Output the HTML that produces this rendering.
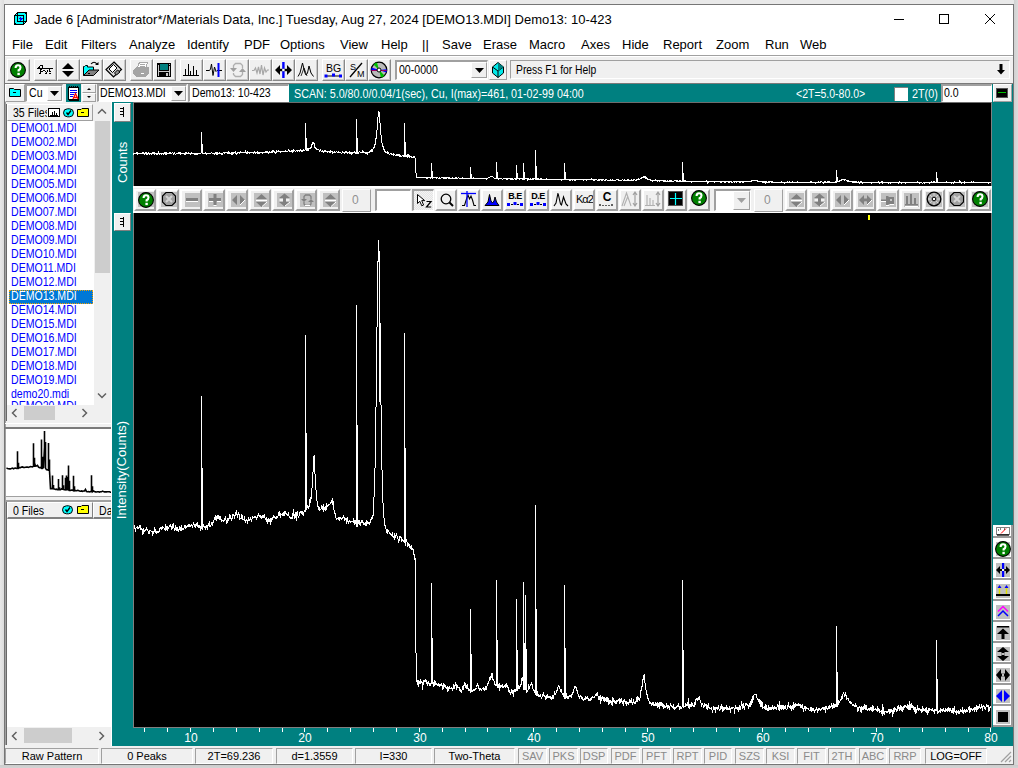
<!DOCTYPE html>
<html><head><meta charset="utf-8">
<style>
*{margin:0;padding:0;box-sizing:border-box}
html,body{width:1018px;height:768px;overflow:hidden;background:#e9e9e9;font-family:"Liberation Sans",sans-serif;}
.a{position:absolute}
#win{left:4px;top:4px;width:1010px;height:761px;border:1px solid #767676;background:#f0f0f0}
.title{font-size:13px;color:#000;white-space:nowrap}
.menu{font-size:13px;color:#000;white-space:nowrap;top:37px}
.ms{font-size:12px;transform:scaleX(0.88);transform-origin:0 0;white-space:nowrap;line-height:14px;color:#000}
.tb{top:59px;width:23px;height:22px;background:#f0f0f0;border-top:1px solid #fff;border-left:1px solid #fff;border-right:1px solid #888;border-bottom:1px solid #888;box-shadow:inset -1px -1px #c8c8c8}
.tb svg{position:absolute;left:2px;top:2px}
.sunk{border-top:1px solid #a0a0a0;border-left:1px solid #a0a0a0;border-bottom:1px solid #fff;border-right:1px solid #fff}
.sunk2{border-top:2px solid #a0a0a0;border-left:2px solid #a0a0a0;border-bottom:1px solid #fff;border-right:1px solid #fff}
.raise{border-top:1px solid #fff;border-left:1px solid #fff;border-right:1px solid #a0a0a0;border-bottom:1px solid #a0a0a0;background:#f0f0f0}
.t11{font-size:11px;white-space:nowrap;line-height:13px}
.fl{font-size:12px;color:#0000ff;white-space:nowrap;left:11px;line-height:14px;transform-origin:0 0;transform:scaleX(0.88)}
.pb{top:189px;width:22px;height:22px;background:#f0f0f0;border-top:2px solid #fff;border-left:2px solid #fff;border-right:2px solid #a0a0a0;border-bottom:2px solid #a0a0a0}
.rb{left:993px;width:20px;height:21px;background:#fff;border-right:2px solid #9a9a9a;border-bottom:2px solid #9a9a9a}
.rb i{position:absolute;left:3px;top:4px;width:14px;height:14px;background:#c0c0c0}
.rb svg{position:absolute;left:1px;top:1px}
.st{top:748px;height:16px;border-top:1px solid #a0a0a0;border-left:1px solid #a0a0a0;border-right:1px solid #fff;border-bottom:1px solid #fff;font-size:11px;line-height:14px;text-align:center;white-space:nowrap;color:#000}
.sg{color:#8a8a8a}
.tick{width:1px;height:4px;top:728px;background:#fff}
.xl{top:732px;font-size:12px;color:#fff;width:30px;text-align:center;line-height:13px}
</style></head><body>
<div class="a" style="left:0;top:0;width:1018px;height:4px;background:#e9e9e9"></div>
<div class="a" style="left:0;top:0;width:4px;height:768px;background:linear-gradient(90deg,#e8e8e8,#dcdcdc)"></div>
<div class="a" style="left:1014px;top:0;width:4px;height:768px;background:linear-gradient(90deg,#d0d0d0,#dcdcdc)"></div>
<div class="a" style="left:0;top:765px;width:1018px;height:3px;background:linear-gradient(180deg,#cccccc,#d4d4d4)"></div>
<div id="win" class="a"></div>
<!-- title bar -->
<div class="a" style="left:5px;top:5px;width:1008px;height:50px;background:#fff"></div>
<svg class="a" style="left:14px;top:12px" width="13" height="13" viewBox="0 0 13 13" shape-rendering="crispEdges"><path d="M3.5 0.5H12.5V9.5L9.5 12.5H0.5V3.5Z" fill="#00ffff" stroke="#000"/><path d="M0.5 3.5H9.5V12.5M3.5 0.5V9.5H12.5" fill="none" stroke="#000"/><path d="M12 1.5H11M1.5 12V11" stroke="#000"/><path d="M6.5 4.5V8.5M4.5 6.5H8.5" stroke="#0000ff" stroke-width="1"/><rect x="5.5" y="5.5" width="2" height="2" fill="#0000ff"/></svg>
<div class="a title" style="left:34px;top:12px;letter-spacing:0.03px">Jade 6 [Administrator*/Materials Data, Inc.] Tuesday, Aug 27, 2024 [DEMO13.MDI] Demo13: 10-423</div>
<svg class="a" style="left:893px;top:14px" width="110" height="12">
<path d="M1 5.5H11" stroke="#000"/>
<rect x="46.5" y="0.5" width="9" height="9" fill="none" stroke="#000"/>
<path d="M92 0L102 10M102 0L92 10" stroke="#000"/>
</svg>
<!-- menu -->
<div class="a menu" style="left:12px">File</div>
<div class="a menu" style="left:45px">Edit</div>
<div class="a menu" style="left:81px">Filters</div>
<div class="a menu" style="left:129px">Analyze</div>
<div class="a menu" style="left:187px">Identify</div>
<div class="a menu" style="left:244px">PDF</div>
<div class="a menu" style="left:280px">Options</div>
<div class="a menu" style="left:340px">View</div>
<div class="a menu" style="left:381px">Help</div>
<div class="a menu" style="left:422px">||</div>
<div class="a menu" style="left:442px">Save</div>
<div class="a menu" style="left:483px">Erase</div>
<div class="a menu" style="left:529px">Macro</div>
<div class="a menu" style="left:581px">Axes</div>
<div class="a menu" style="left:622px">Hide</div>
<div class="a menu" style="left:663px">Report</div>
<div class="a menu" style="left:716px">Zoom</div>
<div class="a menu" style="left:765px">Run</div>
<div class="a menu" style="left:800px">Web</div>
<div class="a" style="left:5px;top:55px;width:1008px;height:1px;background:#a0a0a0"></div>
<div class="a" style="left:5px;top:56px;width:1008px;height:1px;background:#fff"></div>
<!-- toolbar 1 -->
<div class="a tb" style="left:7px"></div>
<div class="a tb" style="left:34px"></div>
<div class="a tb" style="left:57px"></div>
<div class="a tb" style="left:80px"></div>
<div class="a tb" style="left:103px"></div>
<div class="a tb" style="left:130px"></div>
<div class="a tb" style="left:153px"></div>
<div class="a tb" style="left:180px"></div>
<div class="a tb" style="left:203px"></div>
<div class="a tb" style="left:226px"></div>
<div class="a tb" style="left:249px"></div>
<div class="a tb" style="left:272px"></div>
<div class="a tb" style="left:295px"></div>
<div class="a tb" style="left:322px"></div>
<div class="a tb" style="left:345px"></div>
<div class="a tb" style="left:368px"></div>
<svg class="a" style="left:10px;top:62px" width="16" height="16" viewBox="0 0 16 16"><circle cx="8" cy="8" r="7.4" fill="#008000" stroke="#000" stroke-width="1.1"/><path d="M5.6 6 Q5.6 3.3 8 3.3 Q10.5 3.3 10.5 5.6 Q10.5 7.2 8.6 8.2 V9.6" stroke="#fff" stroke-width="2.1" fill="none"/><rect x="7.4" y="10.8" width="2.4" height="2.3" fill="#fff"/></svg>
<svg class="a" style="left:34px;top:59px" width="23" height="22" viewBox="0 0 23 22" shape-rendering="crispEdges"><rect x="6" y="6" width="3" height="1" fill="#000"/><rect x="5" y="7" width="1" height="2" fill="#000"/><rect x="8" y="7" width="1" height="3" fill="#000"/><rect x="4" y="8" width="2" height="1" fill="#000"/><rect x="3" y="9" width="16" height="1" fill="#000"/><rect x="6" y="10" width="2" height="1" fill="#000"/><rect x="6" y="11" width="1" height="2" fill="#000"/><rect x="7" y="12" width="2" height="1" fill="#000"/><rect x="9" y="11" width="2" height="1" fill="#000"/><rect x="11" y="12" width="1" height="1" fill="#000"/><rect x="12" y="13" width="1" height="1" fill="#000"/><rect x="13" y="11" width="1" height="2" fill="#000"/><rect x="15" y="10" width="1" height="3" fill="#000"/><rect x="16" y="12" width="1" height="1" fill="#000"/><rect x="6" y="13" width="1" height="1" fill="#000"/><rect x="5" y="14" width="2" height="1" fill="#000"/><rect x="11" y="14" width="2" height="1" fill="#000"/><rect x="15" y="14" width="2" height="1" fill="#000"/><rect x="8" y="7" width="1" height="1" fill="#000"/></svg>
<svg class="a" style="left:61px;top:62px" width="14" height="16" viewBox="0 0 14 16"><path d="M1 7H13L7 1Z" fill="#000"/><path d="M1 9H13L7 15Z" fill="#000"/></svg>
<svg class="a" style="left:80px;top:59px" width="23" height="22" viewBox="0 0 23 22"><path d="M3.5 16.5V7.5H4.5L5.5 6.5H7.5V8H13.5V11" fill="#00ffff" stroke="#000"/><path d="M3.5 16.5L9 11H19L13.5 16.5Z" fill="#808080" stroke="#000"/><path d="M8 14.5H10" stroke="#000"/><path d="M11 5Q14 1.5 17 5" stroke="#000" fill="none" stroke-width="1.1"/><path d="M15 6H18.5V3Z" fill="#000"/></svg>
<svg class="a" style="left:103px;top:59px" width="23" height="22" viewBox="0 0 23 22"><path d="M11 3L18.5 10.5L10.5 18L3 10.5Z" fill="#d8d8d8" stroke="#000" stroke-width="1.2"/><path d="M6 10L10.5 5.5L14 9L9.5 13.5Z" fill="#fff" stroke="#000"/><path d="M11.5 14L14.5 11L17 13L13.5 16Z" fill="#909090" stroke="#000"/></svg>
<svg class="a" style="left:130px;top:59px" width="23" height="22" viewBox="0 0 23 22" shape-rendering="crispEdges"><path d="M7.5 8L9.5 3.5H17.5L16 8Z" fill="#fff" stroke="#a8a8a8"/><path d="M10 5.5H15M9.5 7H14.5" stroke="#a8a8a8"/><path d="M3 11L6.5 7.5H18.8V14.5L15.5 17.8H6L3 14.8Z" fill="#a4a4a4"/><rect x="11" y="13.5" width="3" height="1.3" fill="#fff"/></svg>
<svg class="a" style="left:153px;top:59px" width="23" height="22" viewBox="0 0 23 22" shape-rendering="crispEdges"><rect x="4" y="4" width="14" height="14" fill="#000"/><rect x="7" y="5" width="8" height="6" fill="#008080"/><rect x="5" y="6" width="1" height="11" fill="#c8c8c8"/><rect x="16" y="7" width="1" height="10" fill="#c8c8c8"/><rect x="16" y="5" width="1" height="1" fill="#c8c8c8"/><rect x="6" y="12" width="10" height="1" fill="#c8c8c8"/><rect x="13" y="14" width="2" height="3" fill="#c8c8c8"/></svg>
<svg class="a" style="left:180px;top:59px" width="23" height="22" viewBox="0 0 23 22" shape-rendering="crispEdges"><path d="M3 16.5H19M5.5 16.5V10M8.5 16.5V5M10.5 16.5V12M13.5 16.5V7M16.5 16.5V11" stroke="#000" stroke-width="1"/></svg>
<svg class="a" style="left:203px;top:59px" width="23" height="22" viewBox="0 0 23 22"><path d="M3 11.5H6.5L7.5 10L8.5 5L10 16.5L11.5 8L13 12.5L14 11.5H19" stroke="#000" stroke-width="1" fill="none"/><rect x="14.5" y="4" width="2" height="14" fill="#0000ff"/></svg>
<svg class="a" style="left:229px;top:62px" width="17" height="16" viewBox="0 0 17 16"><path d="M4.5 6V3.5L6.5 1.5H11.5L13.5 3.5V6M4.5 11V12.5L6.5 14.5H11.5L13.5 12.5V10" stroke="#b0b0b0" stroke-width="1.3" fill="none"/><path d="M1 6H8L4.5 10Z" fill="#a0a0a0"/><path d="M10 10H17L13.5 6Z" fill="#a0a0a0"/></svg>
<svg class="a" style="left:251px;top:62px" width="19" height="16" viewBox="0 0 19 16"><path d="M1 8.5H3L4.5 6L6 11L7.5 5L9 12L10.5 3L12 13L13.5 6L15 10L16.5 8H18" stroke="#a8a8a8" stroke-width="1.2" fill="none"/></svg>
<svg class="a" style="left:274px;top:61px" width="19" height="18" viewBox="0 0 19 18"><rect x="8.2" y="1" width="2.4" height="16" fill="#0000ff"/><path d="M1 9L6 4V14Z M18 9L13 4V14Z" fill="#000"/><rect x="5" y="7.8" width="9" height="2.4" fill="#000"/><rect x="8.2" y="7.8" width="2.4" height="2.4" fill="#fff"/></svg>
<svg class="a" style="left:295px;top:59px" width="23" height="22" viewBox="0 0 23 22"><path d="M3 17.5L5 14L7.5 4L10 14L11 16L12.5 14L14 7L16 14L18.5 17.5" stroke="#000" stroke-width="1" fill="none"/><path d="M6 17L9 9L12 17" stroke="#000" stroke-width="0.8" fill="none"/></svg>
<svg class="a" style="left:324px;top:61px" width="19" height="18" viewBox="0 0 19 18"><text x="9.5" y="10.5" font-family="Liberation Sans" font-size="10.5" text-anchor="middle" fill="#000">BG</text><path d="M2 15H9L16 15" stroke="#000" stroke-width="1"/><rect x="0.5" y="13.5" width="3" height="3" fill="#0000ff"/><rect x="8" y="12.5" width="3" height="3" fill="#0000ff"/><rect x="15" y="13.5" width="3" height="3" fill="#0000ff"/></svg>
<svg class="a" style="left:347px;top:61px" width="19" height="18" viewBox="0 0 19 18"><text x="3" y="8.5" font-family="Liberation Sans" font-size="9" fill="#000">S</text><text x="10" y="16" font-family="Liberation Sans" font-size="9" fill="#000">M</text><path d="M3 16L15 2" stroke="#000" stroke-width="1.3"/></svg>
<svg class="a" style="left:370px;top:61px" width="18" height="18" viewBox="0 0 18 18"><circle cx="9" cy="9" r="7.8" fill="#b8b8b8" stroke="#000" stroke-width="1.2"/><path d="M9 9L3.5 3.5A7.8 7.8 0 0 1 7 1.4Z" fill="#00c000"/><path d="M9 9L14.5 14.5A7.8 7.8 0 0 1 11 16.6Z" fill="#00c000"/><path d="M9 9L1.4 9.8A7.8 7.8 0 0 1 1.6 6.5Z" fill="#0000ff"/><path d="M9 9L16.6 8.2A7.8 7.8 0 0 1 16.4 11.5Z" fill="#0000ff"/><path d="M1.5 9.5H16.5" stroke="#a00060"/><circle cx="9" cy="9" r="2" fill="#fff" stroke="#000"/></svg>
<div class="a" style="left:395px;top:60px;width:93px;height:20px;background:#fff" class="sunk2"></div>
<div class="a sunk2" style="left:395px;top:60px;width:93px;height:20px;background:#fff"></div>
<div class="a ms" style="left:399px;top:63px">00-0000</div>
<div class="a raise" style="left:471px;top:62px;width:16px;height:16px"></div>
<svg class="a" style="left:475px;top:68px" width="9" height="5"><path d="M0 0H9L4.5 5Z" fill="#000"/></svg>
<div class="a raise" style="left:489px;top:60px;width:18px;height:20px"></div>
<svg class="a" style="left:492px;top:62px" width="12" height="16" viewBox="0 0 12 16"><path d="M6 0.5L11.5 5V11L6 15.5L0.5 11V5Z" fill="#00e8e8" stroke="#000"/><path d="M0.5 5L6 9L11.5 5M6 9V15.5" stroke="#000" fill="none"/><path d="M6 0.5L11.5 5L6 9Z" fill="#008080"/></svg>
<div class="a sunk" style="left:510px;top:60px;width:500px;height:19px"></div>
<div class="a ms" style="left:516px;top:63px;transform:scaleX(0.86)">Press F1 for Help</div>
<svg class="a" style="left:996px;top:64px" width="10" height="11"><path d="M3.5 0H6.5V6H9L5 10.5L1 6H3.5Z" fill="#000"/></svg>
<div class="a" style="left:5px;top:83px;width:1008px;height:1px;background:#7a7a7a"></div>
<!-- toolbar 2 -->
<div class="a raise" style="left:5px;top:84px;width:20px;height:18px"></div>
<svg class="a" style="left:9px;top:87px" width="12" height="10"><path d="M0.5 1.5H4.5L5.5 2.5H11.5V9.5H0.5Z" fill="#00ffff" stroke="#000"/><path d="M4 5.5H7" stroke="#000"/></svg>
<div class="a sunk2" style="left:25px;top:84px;width:38px;height:18px;background:#fff"></div>
<div class="a ms" style="left:29px;top:86px">Cu</div>
<div class="a raise" style="left:47px;top:86px;width:15px;height:15px"></div>
<svg class="a" style="left:50px;top:91px" width="9" height="5"><path d="M0 0H9L4.5 5Z" fill="#000"/></svg>
<div class="a" style="left:66px;top:84px;width:15px;height:18px;background:#008080"></div>
<svg class="a" style="left:67px;top:85px" width="13" height="16" viewBox="0 0 13 16" shape-rendering="crispEdges"><rect x="1.5" y="2.5" width="10" height="12" fill="#fff" stroke="#000"/><path d="M2 1.5H3M4 1.5H5M6 1.5H7M8 1.5H9M10 1.5H11" stroke="#000"/><path d="M3 5.5H10M3 7.5H10M3 9.5H7M3 11.5H6" stroke="#0000ff"/><path d="M6 14L8.5 8.5L11 14M7 12.5H10" stroke="#ff0000" stroke-width="1.3" fill="none" shape-rendering="auto"/><path d="M2 15.5H12" stroke="#000"/></svg>
<div class="a raise" style="left:82px;top:84px;width:14px;height:9px"></div>
<div class="a raise" style="left:82px;top:93px;width:14px;height:9px"></div>
<svg class="a" style="left:86px;top:87px" width="6" height="12"><path d="M1 3H5L3 1Z" fill="#000"/><path d="M1 9H5L3 11Z" fill="#000"/></svg>
<div class="a sunk2" style="left:97px;top:84px;width:90px;height:18px;background:#fff"></div>
<div class="a ms" style="left:100px;top:86px">DEMO13.MDI</div>
<div class="a raise" style="left:171px;top:86px;width:15px;height:15px"></div>
<svg class="a" style="left:174px;top:91px" width="9" height="5"><path d="M0 0H9L4.5 5Z" fill="#000"/></svg>
<div class="a sunk2" style="left:188px;top:84px;width:101px;height:18px;background:#fff"></div>
<div class="a ms" style="left:192px;top:86px">Demo13: 10-423</div>
<!-- teal plot area -->
<div class="a" style="left:289px;top:84px;width:724px;height:18px;background:#008080"></div>
<div class="a" style="left:112px;top:102px;width:901px;height:644px;background:#008080"></div>
<div class="a ms" style="left:294px;top:87px;color:#fff;transform:scaleX(0.893)">SCAN: 5.0/80.0/0.04/1(sec), Cu, I(max)=461, 01-02-99 04:00</div>
<div class="a ms" style="left:796px;top:87px;color:#fff;transform:scaleX(0.875)">&lt;2T=5.0-80.0&gt;</div>
<div class="a" style="left:894px;top:87px;width:14px;height:14px;background:#fff;border-top:1px solid #808080;border-left:1px solid #808080"></div>
<div class="a ms" style="left:912px;top:87px;color:#fff;transform:scaleX(0.9)">2T(0)</div>
<div class="a sunk2" style="left:941px;top:84px;width:51px;height:18px;background:#fff"></div>
<div class="a ms" style="left:944px;top:86px">0.0</div>
<div class="a raise" style="left:993px;top:84px;width:19px;height:18px"></div>
<div class="a" style="left:996px;top:88px;width:12px;height:10px;background:#000;border:1px solid #555"></div>
<div class="a" style="left:998px;top:92px;width:8px;height:1px;background:#00c000"></div>
<!-- left panel -->
<div class="a" style="left:5px;top:102px;width:107px;height:644px;background:#f0f0f0"></div>
<div class="a" style="left:5px;top:102px;width:1px;height:643px;background:#a0a0a0"></div>
<div class="a raise" style="left:7px;top:104px;width:86px;height:17px"></div>
<div class="a" style="left:8px;top:105px;width:39px;height:15px;overflow:hidden"><div class="ms" style="position:absolute;left:5px;top:1px">35 Files</div></div>
<svg class="a" style="left:47px;top:108px" width="44" height="10"><rect x="1.5" y="0.5" width="11" height="8" fill="#fff" stroke="#000"/><path d="M3 7H11M5 7V3.5M7 7V2.5M9 7V4.5" stroke="#000" shape-rendering="crispEdges"/><rect x="16.5" y="0.8" width="10" height="8" rx="4" fill="#00ffff" stroke="#000"/><path d="M19.5 4.5L21 6.5L24 2.5" stroke="#000" stroke-width="1.4" fill="none"/><path d="M30.5 1.5H34L35 0.5H41.5V8.5H30.5Z" fill="#ffff00" stroke="#000"/><path d="M34 4.5H37" stroke="#000"/></svg>
<div class="a" style="left:7px;top:121px;width:87px;height:284px;background:#fff"></div>
<div class="a" style="left:94px;top:104px;width:16px;height:301px;background:#f0f0f0"></div>
<div class="a" style="left:95px;top:121px;width:15px;height:152px;background:#cdcdcd"></div>
<svg class="a" style="left:97px;top:108px" width="10" height="7"><path d="M1 5.5L5 1.5L9 5.5" stroke="#606060" stroke-width="1.5" fill="none"/></svg>
<svg class="a" style="left:97px;top:392px" width="10" height="7"><path d="M1 1.5L5 5.5L9 1.5" stroke="#606060" stroke-width="1.5" fill="none"/></svg>
<div class="a fl" style="top:121px">DEMO01.MDI</div>
<div class="a fl" style="top:135px">DEMO02.MDI</div>
<div class="a fl" style="top:149px">DEMO03.MDI</div>
<div class="a fl" style="top:163px">DEMO04.MDI</div>
<div class="a fl" style="top:177px">DEMO05.MDI</div>
<div class="a fl" style="top:191px">DEMO06.MDI</div>
<div class="a fl" style="top:205px">DEMO07.MDI</div>
<div class="a fl" style="top:219px">DEMO08.MDI</div>
<div class="a fl" style="top:233px">DEMO09.MDI</div>
<div class="a fl" style="top:247px">DEMO10.MDI</div>
<div class="a fl" style="top:261px">DEMO11.MDI</div>
<div class="a fl" style="top:275px">DEMO12.MDI</div>
<div class="a" style="left:9px;top:290px;width:84px;height:14px;background:#0078d7;outline:1px dotted #f0a000;outline-offset:-1px"></div>
<div class="a fl" style="top:289px;color:#fff">DEMO13.MDI</div>
<div class="a fl" style="top:303px">DEMO14.MDI</div>
<div class="a fl" style="top:317px">DEMO15.MDI</div>
<div class="a fl" style="top:331px">DEMO16.MDI</div>
<div class="a fl" style="top:345px">DEMO17.MDI</div>
<div class="a fl" style="top:359px">DEMO18.MDI</div>
<div class="a fl" style="top:373px">DEMO19.MDI</div>
<div class="a fl" style="top:387px">demo20.mdi</div>
<div class="a" style="left:7px;top:401px;width:87px;height:4px;overflow:hidden"><div class="fl" style="position:absolute;left:4px;top:-2px">DEMO20.MDI</div></div>
<div class="a" style="left:7px;top:405px;width:103px;height:16px;background:#f0f0f0"></div>
<div class="a" style="left:24px;top:406px;width:31px;height:14px;background:#cdcdcd"></div>
<svg class="a" style="left:11px;top:408px" width="7" height="10"><path d="M5.5 1L1.5 5L5.5 9" stroke="#606060" stroke-width="1.5" fill="none"/></svg>
<svg class="a" style="left:81px;top:408px" width="7" height="10"><path d="M1.5 1L5.5 5L1.5 9" stroke="#606060" stroke-width="1.5" fill="none"/></svg>
<div class="a" style="left:5px;top:427px;width:107px;height:2px;background:#7a7a7a"></div><div class="a" style="left:5px;top:423px;width:107px;height:1px;background:#fff"></div>
<div class="a" style="left:6px;top:429px;width:106px;height:67px;background:#fff"></div>
<svg class="a" style="left:6px;top:429px" width="106" height="67"><polyline points="0.5,39.1 1.5,39.5 2.5,39.7 3.5,39.9 4.5,39.9 5.5,39.4 6.5,39.1 7.5,39.8 8.5,39.3 9.5,39.0 10.5,39.5 11.5,39.2 11.5,22.2 11.5,39.2 12.5,39.2 12.5,33.7 12.5,39.2 12.5,39.2 13.5,38.4 14.5,38.6 15.5,38.1 16.5,37.9 17.5,38.4 18.5,38.5 19.5,38.2 20.5,38.1 21.5,38.1 22.5,38.4 23.5,37.9 24.5,37.5 25.5,37.7 26.5,37.8 27.5,37.1 27.5,14.3 27.5,37.1 28.5,37.1 28.5,28.7 28.5,37.1 28.5,34.1 29.5,37.1 30.5,37.0 31.5,36.4 32.5,38.2 33.5,38.6 34.5,38.6 35.5,39.1 35.5,10.4 35.5,39.1 36.5,39.1 36.5,27.7 36.5,39.1 36.5,39.2 37.5,38.6 38.5,18.3 38.5,1.9 38.5,18.3 39.5,18.3 39.5,13.1 39.5,18.3 39.5,39.1 40.5,40.8 41.5,40.8 42.5,41.2 42.5,14.0 42.5,41.2 43.5,41.2 43.5,30.6 43.5,41.2 43.5,41.8 44.5,59.6 45.5,59.5 46.5,59.6 46.5,46.6 46.5,59.6 47.5,59.6 47.5,56.1 47.5,59.6 47.5,59.8 48.5,60.1 49.5,60.5 50.5,60.2 51.5,60.6 52.5,60.7 52.5,50.0 52.5,60.7 53.5,60.7 53.5,58.3 53.5,60.7 53.5,60.6 54.5,60.6 55.5,59.8 56.5,60.1 56.5,46.2 56.5,60.1 57.5,60.1 57.5,56.2 57.5,60.1 57.5,60.4 58.5,60.7 59.5,60.8 59.5,48.7 59.5,60.8 60.5,60.8 60.5,57.7 60.5,60.8 60.5,59.9 60.5,46.4 60.5,59.9 61.5,59.9 61.5,56.2 61.5,59.9 61.5,60.4 61.5,48.1 61.5,60.4 62.5,60.4 62.5,57.3 62.5,60.4 62.5,60.9 62.5,36.4 62.5,60.9 63.5,60.9 63.5,51.7 63.5,60.9 63.5,61.4 64.5,61.4 65.5,61.1 66.5,61.1 67.5,61.7 67.5,46.8 67.5,61.7 68.5,61.7 68.5,57.3 68.5,61.7 68.5,60.9 69.5,61.7 70.5,61.7 71.5,61.4 72.5,61.5 73.5,62.0 74.5,62.2 75.5,61.9 76.5,62.3 77.5,62.0 78.5,62.0 79.5,60.4 80.5,62.5 81.5,62.8 82.5,62.6 83.5,62.9 84.5,62.6 85.5,62.4 85.5,46.2 85.5,62.4 86.5,62.4 86.5,57.3 86.5,62.4 86.5,62.7 87.5,62.0 88.5,62.5 89.5,62.9 90.5,63.0 91.5,62.8 92.5,62.7 93.5,63.1 94.5,62.8 95.5,62.8 96.5,62.1 97.5,62.6 98.5,62.9 99.5,62.9 100.5,62.9 101.5,62.8 102.5,62.8 103.5,62.8 104.5,63.2 105.5,63.2 106.5,63.0" fill="none" stroke="#000" stroke-width="1.6"/></svg>
<div class="a" style="left:5px;top:496px;width:107px;height:1px;background:#a0a0a0"></div>
<div class="a" style="left:6px;top:500px;width:106px;height:2px;background:#a0a0a0"></div><div class="a raise" style="left:7px;top:502px;width:86px;height:17px;border-bottom:2px solid #808080;border-right-color:#808080"></div>
<div class="a ms" style="left:13px;top:504px">0 Files</div>
<svg class="a" style="left:62px;top:505px" width="28" height="10"><rect x="0.5" y="0.8" width="10" height="8" rx="4" fill="#00ffff" stroke="#000"/><path d="M3.5 4.5L5 6.5L8 2.5" stroke="#000" stroke-width="1.4" fill="none"/><path d="M15.5 1.5H19L20 0.5H26.5V8.5H15.5Z" fill="#ffff00" stroke="#000"/><path d="M19 4.5H22" stroke="#000"/></svg>
<div class="a raise" style="left:93px;top:502px;width:19px;height:17px;overflow:hidden;border-bottom:2px solid #808080"><span class="ms" style="position:absolute;left:5px;top:1px">Da</span></div>
<div class="a" style="left:7px;top:519px;width:105px;height:208px;background:#fff"></div>
<div class="a" style="left:7px;top:727px;width:103px;height:18px;background:#f0f0f0"></div>
<div class="a" style="left:24px;top:728px;width:48px;height:15px;background:#cdcdcd"></div>
<svg class="a" style="left:11px;top:731px" width="7" height="10"><path d="M5.5 1L1.5 5L5.5 9" stroke="#606060" stroke-width="1.5" fill="none"/></svg>
<svg class="a" style="left:98px;top:731px" width="7" height="10"><path d="M1.5 1L5.5 5L1.5 9" stroke="#606060" stroke-width="1.5" fill="none"/></svg>
<div class="a" style="left:111px;top:102px;width:1px;height:644px;background:#fff"></div>
<div class="a" style="left:6px;top:104px;width:1px;height:317px;background:#696969"></div>
<div class="a" style="left:6px;top:502px;width:1px;height:243px;background:#696969"></div>
<!-- plots -->
<div class="a" style="left:133px;top:102px;width:859px;height:84px;background:#000;border-left:1px solid #808080;border-right:1px solid #808080;border-top:1px solid #6e6e6e"></div>
<svg class="a" style="left:0;top:0" width="1018" height="768" shape-rendering="crispEdges">
<polyline points="133.5,154.5 133.5,153.5 134.5,153.5 134.5,153.5 135.5,153.5 135.5,153.5 136.5,153.5 136.5,152.5 137.5,152.5 137.5,154.5 138.5,153.5 138.5,153.5 139.5,153.5 139.5,153.5 140.5,153.5 140.5,153.5 141.5,153.5 141.5,153.5 142.5,152.5 142.5,153.5 143.5,153.5 143.5,152.5 144.5,154.5 144.5,153.5 145.5,152.5 145.5,153.5 146.5,154.5 146.5,152.5 147.5,153.5 147.5,154.5 148.5,152.5 148.5,153.5 149.5,154.5 149.5,153.5 150.5,153.5 150.5,153.5 151.5,153.5 151.5,154.5 152.5,153.5 152.5,152.5 153.5,152.5 153.5,152.5 154.5,154.5 154.5,152.5 155.5,153.5 155.5,153.5 156.5,153.5 156.5,154.5 157.5,153.5 157.5,154.5 158.5,151.5 158.5,152.5 159.5,154.5 159.5,153.5 160.5,153.5 160.5,153.5 161.5,154.5 161.5,153.5 162.5,153.5 162.5,153.5 163.5,153.5 163.5,154.5 164.5,152.5 164.5,152.5 165.5,152.5 165.5,154.5 166.5,152.5 166.5,154.5 167.5,153.5 167.5,153.5 168.5,153.5 168.5,153.5 169.5,153.5 169.5,152.5 170.5,152.5 170.5,153.5 171.5,153.5 171.5,153.5 172.5,152.5 172.5,152.5 173.5,153.5 173.5,154.5 174.5,152.5 174.5,153.5 175.5,154.5 175.5,154.5 176.5,153.5 176.5,153.5 177.5,153.5 177.5,153.5 178.5,153.5 178.5,152.5 179.5,152.5 179.5,153.5 180.5,152.5 180.5,154.5 181.5,153.5 181.5,153.5 182.5,153.5 182.5,153.5 183.5,153.5 183.5,153.5 184.5,154.5 184.5,153.5 185.5,152.5 185.5,154.5 186.5,152.5 186.5,153.5 187.5,153.5 187.5,153.5 188.5,152.5 188.5,153.5 189.5,153.5 189.5,153.5 190.5,153.5 190.5,154.5 191.5,153.5 191.5,152.5 192.5,153.5 192.5,153.5 193.5,153.5 193.5,153.5 194.5,154.5 194.5,153.5 195.5,153.5 195.5,154.5 196.5,153.5 196.5,154.5 197.5,153.5 197.5,154.5 198.5,153.5 198.5,153.5 199.5,153.5 199.5,153.5 200.5,153.5 200.5,153.5 201.5,152.5 201.5,152.5 201.5,131.5 201.5,152.5 202.5,152.5 202.5,143.5 202.5,152.5 202.5,152.5 202.5,153.5 203.5,153.5 203.5,153.5 204.5,153.5 204.5,153.5 205.5,153.5 205.5,152.5 206.5,153.5 206.5,154.5 207.5,153.5 207.5,153.5 208.5,153.5 208.5,153.5 209.5,153.5 209.5,153.5 210.5,153.5 210.5,153.5 211.5,152.5 211.5,152.5 212.5,153.5 212.5,153.5 213.5,153.5 213.5,153.5 214.5,153.5 214.5,154.5 215.5,153.5 215.5,152.5 216.5,152.5 216.5,154.5 217.5,154.5 217.5,152.5 218.5,153.5 218.5,153.5 219.5,153.5 219.5,152.5 220.5,153.5 220.5,153.5 221.5,153.5 221.5,154.5 222.5,154.5 222.5,153.5 223.5,152.5 223.5,152.5 224.5,153.5 224.5,152.5 225.5,152.5 225.5,152.5 226.5,152.5 226.5,152.5 227.5,153.5 227.5,153.5 228.5,151.5 228.5,153.5 229.5,152.5 229.5,153.5 230.5,153.5 230.5,153.5 231.5,152.5 231.5,154.5 232.5,152.5 232.5,154.5 233.5,152.5 233.5,152.5 234.5,152.5 234.5,152.5 235.5,153.5 235.5,151.5 236.5,154.5 236.5,153.5 237.5,153.5 237.5,152.5 238.5,152.5 238.5,152.5 239.5,152.5 239.5,153.5 240.5,151.5 240.5,152.5 241.5,152.5 241.5,152.5 242.5,152.5 242.5,152.5 243.5,152.5 243.5,152.5 244.5,152.5 244.5,152.5 245.5,152.5 245.5,150.5 246.5,153.5 246.5,152.5 247.5,153.5 247.5,151.5 248.5,152.5 248.5,152.5 249.5,153.5 249.5,152.5 250.5,152.5 250.5,152.5 251.5,152.5 251.5,152.5 252.5,152.5 252.5,152.5 253.5,153.5 253.5,152.5 254.5,152.5 254.5,151.5 255.5,153.5 255.5,152.5 256.5,152.5 256.5,152.5 257.5,151.5 257.5,153.5 258.5,153.5 258.5,152.5 259.5,153.5 259.5,152.5 260.5,152.5 260.5,152.5 261.5,152.5 261.5,152.5 262.5,153.5 262.5,152.5 263.5,152.5 263.5,152.5 264.5,152.5 264.5,152.5 265.5,151.5 265.5,152.5 266.5,152.5 266.5,151.5 267.5,151.5 267.5,152.5 268.5,153.5 268.5,152.5 269.5,152.5 269.5,151.5 270.5,152.5 270.5,152.5 271.5,152.5 271.5,151.5 272.5,152.5 272.5,150.5 273.5,151.5 273.5,150.5 274.5,152.5 274.5,152.5 275.5,152.5 275.5,153.5 276.5,152.5 276.5,150.5 277.5,151.5 277.5,151.5 278.5,150.5 278.5,151.5 279.5,151.5 279.5,151.5 280.5,152.5 280.5,151.5 281.5,151.5 281.5,151.5 282.5,151.5 282.5,151.5 283.5,151.5 283.5,151.5 284.5,151.5 284.5,151.5 285.5,150.5 285.5,151.5 286.5,151.5 286.5,151.5 287.5,151.5 287.5,151.5 288.5,150.5 288.5,149.5 289.5,151.5 289.5,150.5 290.5,151.5 290.5,151.5 291.5,151.5 291.5,150.5 292.5,150.5 292.5,152.5 293.5,149.5 293.5,151.5 294.5,150.5 294.5,150.5 295.5,151.5 295.5,151.5 296.5,150.5 296.5,150.5 297.5,150.5 297.5,151.5 298.5,150.5 298.5,150.5 299.5,151.5 299.5,150.5 300.5,150.5 300.5,149.5 301.5,151.5 301.5,151.5 302.5,151.5 302.5,150.5 303.5,150.5 303.5,149.5 304.5,150.5 304.5,150.5 305.5,149.5 305.5,149.5 305.5,122.5 305.5,149.5 306.5,149.5 306.5,137.5 306.5,149.5 306.5,150.5 306.5,150.5 307.5,150.5 307.5,148.5 308.5,150.5 308.5,148.5 309.5,148.5 309.5,148.5 310.5,147.5 310.5,148.5 311.5,147.5 311.5,144.5 312.5,144.5 312.5,142.5 313.5,142.5 313.5,142.5 314.5,144.5 314.5,147.5 315.5,148.5 315.5,147.5 316.5,148.5 316.5,149.5 317.5,149.5 317.5,149.5 318.5,149.5 318.5,149.5 319.5,150.5 319.5,151.5 320.5,149.5 320.5,150.5 321.5,151.5 321.5,151.5 322.5,151.5 322.5,150.5 323.5,151.5 323.5,152.5 324.5,150.5 324.5,151.5 325.5,151.5 325.5,150.5 326.5,151.5 326.5,151.5 327.5,152.5 327.5,151.5 328.5,151.5 328.5,151.5 329.5,151.5 329.5,152.5 330.5,152.5 330.5,150.5 331.5,151.5 331.5,151.5 332.5,151.5 332.5,153.5 333.5,152.5 333.5,152.5 334.5,152.5 334.5,151.5 335.5,152.5 335.5,152.5 336.5,151.5 336.5,151.5 337.5,152.5 337.5,152.5 338.5,152.5 338.5,151.5 339.5,152.5 339.5,152.5 340.5,152.5 340.5,152.5 341.5,153.5 341.5,153.5 342.5,152.5 342.5,151.5 343.5,152.5 343.5,152.5 344.5,152.5 344.5,153.5 345.5,152.5 345.5,151.5 346.5,151.5 346.5,152.5 347.5,153.5 347.5,152.5 348.5,152.5 348.5,152.5 349.5,151.5 349.5,153.5 350.5,152.5 350.5,153.5 351.5,154.5 351.5,152.5 352.5,153.5 352.5,152.5 353.5,152.5 353.5,152.5 354.5,152.5 354.5,151.5 355.5,153.5 355.5,152.5 356.5,153.5 356.5,153.5 356.5,118.5 356.5,153.5 357.5,153.5 357.5,137.5 357.5,153.5 357.5,152.5 357.5,153.5 358.5,153.5 358.5,152.5 359.5,151.5 359.5,151.5 360.5,152.5 360.5,152.5 361.5,152.5 361.5,152.5 362.5,152.5 362.5,150.5 363.5,152.5 363.5,152.5 364.5,152.5 364.5,152.5 365.5,152.5 365.5,153.5 366.5,152.5 366.5,152.5 367.5,154.5 367.5,152.5 368.5,152.5 368.5,152.5 369.5,151.5 369.5,152.5 370.5,151.5 370.5,150.5 371.5,151.5 371.5,149.5 372.5,151.5 372.5,149.5 373.5,148.5 373.5,148.5 374.5,146.5 374.5,145.5 375.5,143.5 375.5,140.5 376.5,136.5 376.5,134.5 377.5,126.5 377.5,119.5 378.5,114.5 378.5,111.5 379.5,112.5 379.5,119.5 380.5,126.5 380.5,132.5 381.5,137.5 381.5,140.5 382.5,145.5 382.5,145.5 383.5,147.5 383.5,149.5 384.5,149.5 384.5,151.5 385.5,151.5 385.5,152.5 386.5,152.5 386.5,152.5 387.5,153.5 387.5,151.5 388.5,153.5 388.5,153.5 389.5,154.5 389.5,154.5 390.5,153.5 390.5,153.5 391.5,153.5 391.5,154.5 392.5,154.5 392.5,154.5 393.5,155.5 393.5,153.5 394.5,154.5 394.5,154.5 395.5,155.5 395.5,155.5 396.5,155.5 396.5,154.5 397.5,154.5 397.5,155.5 398.5,154.5 398.5,155.5 399.5,154.5 399.5,156.5 400.5,156.5 400.5,155.5 401.5,156.5 401.5,156.5 402.5,155.5 402.5,155.5 403.5,156.5 403.5,155.5 404.5,156.5 404.5,155.5 404.5,122.5 404.5,155.5 405.5,155.5 405.5,141.5 405.5,155.5 405.5,156.5 405.5,156.5 406.5,156.5 406.5,155.5 407.5,157.5 407.5,154.5 408.5,156.5 408.5,154.5 409.5,156.5 409.5,157.5 410.5,156.5 410.5,156.5 411.5,156.5 411.5,157.5 412.5,157.5 412.5,157.5 413.5,156.5 413.5,157.5 414.5,156.5 414.5,157.5 415.5,158.5 415.5,167.5 416.5,177.5 416.5,177.5 417.5,177.5 417.5,177.5 418.5,177.5 418.5,177.5 419.5,177.5 419.5,177.5 420.5,177.5 420.5,177.5 421.5,177.5 421.5,177.5 422.5,177.5 422.5,177.5 423.5,177.5 423.5,177.5 424.5,177.5 424.5,177.5 425.5,177.5 425.5,177.5 426.5,178.5 426.5,177.5 427.5,177.5 427.5,178.5 428.5,177.5 428.5,177.5 429.5,177.5 429.5,177.5 430.5,178.5 430.5,177.5 431.5,177.5 431.5,177.5 431.5,162.5 431.5,177.5 432.5,177.5 432.5,170.5 432.5,177.5 432.5,178.5 432.5,176.5 433.5,177.5 433.5,177.5 434.5,177.5 434.5,177.5 435.5,177.5 435.5,177.5 436.5,177.5 436.5,178.5 437.5,177.5 437.5,177.5 438.5,178.5 438.5,178.5 439.5,178.5 439.5,177.5 440.5,178.5 440.5,178.5 441.5,177.5 441.5,177.5 442.5,177.5 442.5,177.5 443.5,177.5 443.5,178.5 444.5,177.5 444.5,178.5 445.5,178.5 445.5,177.5 446.5,178.5 446.5,177.5 447.5,177.5 447.5,177.5 448.5,177.5 448.5,178.5 449.5,177.5 449.5,178.5 450.5,178.5 450.5,178.5 451.5,178.5 451.5,178.5 452.5,178.5 452.5,177.5 453.5,178.5 453.5,178.5 454.5,178.5 454.5,178.5 455.5,177.5 455.5,178.5 456.5,177.5 456.5,178.5 457.5,178.5 457.5,178.5 458.5,177.5 458.5,177.5 459.5,178.5 459.5,178.5 460.5,178.5 460.5,178.5 461.5,178.5 461.5,178.5 462.5,178.5 462.5,177.5 463.5,178.5 463.5,178.5 464.5,178.5 464.5,178.5 465.5,178.5 465.5,178.5 466.5,178.5 466.5,178.5 467.5,178.5 467.5,178.5 468.5,178.5 468.5,178.5 469.5,178.5 469.5,178.5 470.5,178.5 470.5,166.5 470.5,178.5 471.5,178.5 471.5,173.5 471.5,178.5 470.5,178.5 471.5,178.5 471.5,178.5 472.5,178.5 472.5,178.5 473.5,177.5 473.5,178.5 474.5,178.5 474.5,178.5 475.5,178.5 475.5,178.5 476.5,178.5 476.5,178.5 477.5,178.5 477.5,178.5 478.5,178.5 478.5,178.5 479.5,178.5 479.5,178.5 480.5,178.5 480.5,178.5 481.5,178.5 481.5,178.5 482.5,178.5 482.5,178.5 483.5,178.5 483.5,178.5 484.5,178.5 484.5,178.5 485.5,178.5 485.5,178.5 486.5,178.5 486.5,179.5 487.5,178.5 487.5,178.5 488.5,177.5 488.5,177.5 489.5,177.5 489.5,177.5 490.5,176.5 490.5,176.5 491.5,176.5 491.5,176.5 492.5,176.5 492.5,176.5 493.5,177.5 493.5,177.5 494.5,178.5 494.5,178.5 495.5,178.5 495.5,178.5 496.5,178.5 496.5,178.5 496.5,161.5 496.5,178.5 497.5,178.5 497.5,171.5 497.5,178.5 497.5,178.5 497.5,178.5 498.5,179.5 498.5,178.5 499.5,178.5 499.5,178.5 500.5,178.5 500.5,178.5 501.5,178.5 501.5,178.5 502.5,179.5 502.5,179.5 503.5,178.5 503.5,178.5 504.5,178.5 504.5,178.5 505.5,178.5 505.5,178.5 506.5,179.5 506.5,178.5 507.5,178.5 507.5,179.5 508.5,178.5 508.5,178.5 509.5,178.5 509.5,178.5 510.5,179.5 510.5,178.5 511.5,179.5 511.5,178.5 512.5,179.5 512.5,178.5 513.5,179.5 513.5,179.5 514.5,178.5 514.5,178.5 515.5,178.5 515.5,179.5 516.5,179.5 516.5,178.5 516.5,164.5 516.5,178.5 517.5,178.5 517.5,172.5 517.5,178.5 517.5,178.5 517.5,178.5 518.5,178.5 518.5,178.5 519.5,179.5 519.5,178.5 520.5,178.5 520.5,178.5 521.5,178.5 521.5,178.5 522.5,178.5 522.5,179.5 523.5,178.5 523.5,179.5 523.5,162.5 523.5,179.5 524.5,179.5 524.5,171.5 524.5,179.5 524.5,179.5 524.5,179.5 525.5,178.5 525.5,178.5 526.5,178.5 526.5,178.5 527.5,178.5 527.5,180.5 528.5,178.5 528.5,179.5 529.5,179.5 529.5,179.5 530.5,178.5 530.5,179.5 531.5,179.5 531.5,179.5 532.5,179.5 532.5,178.5 533.5,179.5 533.5,178.5 534.5,178.5 534.5,178.5 535.5,179.5 535.5,179.5 535.5,149.5 535.5,179.5 536.5,179.5 536.5,165.5 536.5,179.5 536.5,179.5 536.5,179.5 537.5,179.5 537.5,178.5 538.5,179.5 538.5,178.5 539.5,179.5 539.5,179.5 540.5,178.5 540.5,179.5 541.5,178.5 541.5,179.5 542.5,179.5 542.5,179.5 543.5,179.5 543.5,179.5 544.5,179.5 544.5,179.5 545.5,179.5 545.5,179.5 546.5,178.5 546.5,179.5 547.5,179.5 547.5,179.5 548.5,179.5 548.5,179.5 549.5,179.5 549.5,179.5 550.5,179.5 550.5,179.5 551.5,179.5 551.5,179.5 552.5,179.5 552.5,179.5 553.5,179.5 553.5,179.5 554.5,179.5 554.5,179.5 555.5,179.5 555.5,179.5 556.5,179.5 556.5,179.5 557.5,179.5 557.5,179.5 558.5,179.5 558.5,179.5 559.5,179.5 559.5,179.5 560.5,179.5 560.5,179.5 561.5,179.5 561.5,180.5 562.5,179.5 562.5,179.5 563.5,179.5 563.5,179.5 564.5,179.5 564.5,179.5 564.5,162.5 564.5,179.5 565.5,179.5 565.5,171.5 565.5,179.5 565.5,179.5 565.5,179.5 566.5,179.5 566.5,179.5 567.5,179.5 567.5,179.5 568.5,179.5 568.5,179.5 569.5,180.5 569.5,179.5 570.5,179.5 570.5,180.5 571.5,179.5 571.5,179.5 572.5,180.5 572.5,179.5 573.5,179.5 573.5,179.5 574.5,180.5 574.5,179.5 575.5,180.5 575.5,179.5 576.5,179.5 576.5,179.5 577.5,179.5 577.5,179.5 578.5,179.5 578.5,179.5 579.5,179.5 579.5,179.5 580.5,179.5 580.5,179.5 581.5,179.5 581.5,179.5 582.5,179.5 582.5,179.5 583.5,180.5 583.5,179.5 584.5,179.5 584.5,179.5 585.5,179.5 585.5,179.5 586.5,180.5 586.5,179.5 587.5,179.5 587.5,179.5 588.5,179.5 588.5,179.5 589.5,179.5 589.5,179.5 590.5,179.5 590.5,179.5 591.5,179.5 591.5,178.5 592.5,179.5 592.5,179.5 593.5,179.5 593.5,180.5 594.5,179.5 594.5,180.5 595.5,179.5 595.5,179.5 596.5,179.5 596.5,179.5 597.5,180.5 597.5,180.5 598.5,179.5 598.5,180.5 599.5,180.5 599.5,179.5 600.5,179.5 600.5,179.5 601.5,180.5 601.5,179.5 602.5,180.5 602.5,179.5 603.5,179.5 603.5,179.5 604.5,180.5 604.5,180.5 605.5,179.5 605.5,180.5 606.5,179.5 606.5,179.5 607.5,180.5 607.5,180.5 608.5,180.5 608.5,180.5 609.5,180.5 609.5,180.5 610.5,179.5 610.5,180.5 611.5,180.5 611.5,180.5 612.5,180.5 612.5,179.5 613.5,180.5 613.5,180.5 614.5,180.5 614.5,180.5 615.5,180.5 615.5,180.5 616.5,179.5 616.5,179.5 617.5,179.5 617.5,179.5 618.5,180.5 618.5,179.5 619.5,180.5 619.5,180.5 620.5,180.5 620.5,180.5 621.5,180.5 621.5,180.5 622.5,179.5 622.5,179.5 623.5,180.5 623.5,180.5 624.5,180.5 624.5,179.5 625.5,180.5 625.5,180.5 626.5,180.5 626.5,180.5 627.5,180.5 627.5,179.5 628.5,179.5 628.5,180.5 629.5,180.5 629.5,180.5 630.5,180.5 630.5,180.5 631.5,179.5 631.5,180.5 632.5,180.5 632.5,180.5 633.5,180.5 633.5,179.5 634.5,179.5 634.5,179.5 635.5,180.5 635.5,180.5 636.5,180.5 636.5,179.5 637.5,179.5 637.5,179.5 638.5,179.5 638.5,178.5 639.5,179.5 639.5,179.5 640.5,178.5 640.5,178.5 641.5,178.5 641.5,177.5 642.5,177.5 642.5,177.5 643.5,177.5 643.5,176.5 644.5,176.5 644.5,177.5 645.5,176.5 645.5,178.5 646.5,177.5 646.5,178.5 647.5,178.5 647.5,179.5 648.5,179.5 648.5,179.5 649.5,179.5 649.5,179.5 650.5,179.5 650.5,180.5 651.5,180.5 651.5,180.5 652.5,180.5 652.5,181.5 653.5,180.5 653.5,180.5 654.5,180.5 654.5,180.5 655.5,180.5 655.5,179.5 656.5,180.5 656.5,180.5 657.5,180.5 657.5,181.5 658.5,180.5 658.5,180.5 659.5,181.5 659.5,180.5 660.5,180.5 660.5,180.5 661.5,180.5 661.5,180.5 662.5,180.5 662.5,180.5 663.5,180.5 663.5,181.5 664.5,180.5 664.5,181.5 665.5,181.5 665.5,180.5 666.5,181.5 666.5,181.5 667.5,180.5 667.5,181.5 668.5,181.5 668.5,181.5 669.5,181.5 669.5,180.5 670.5,180.5 670.5,181.5 671.5,180.5 671.5,181.5 672.5,181.5 672.5,181.5 673.5,181.5 673.5,181.5 674.5,180.5 674.5,180.5 675.5,180.5 675.5,180.5 676.5,181.5 676.5,180.5 677.5,180.5 677.5,181.5 678.5,181.5 678.5,181.5 679.5,181.5 679.5,180.5 680.5,180.5 680.5,181.5 681.5,181.5 681.5,181.5 682.5,181.5 682.5,181.5 682.5,161.5 682.5,181.5 683.5,181.5 683.5,172.5 683.5,181.5 683.5,181.5 683.5,181.5 684.5,181.5 684.5,180.5 685.5,181.5 685.5,180.5 686.5,181.5 686.5,181.5 687.5,181.5 687.5,181.5 688.5,181.5 688.5,181.5 689.5,181.5 689.5,181.5 690.5,181.5 690.5,181.5 691.5,181.5 691.5,182.5 692.5,181.5 692.5,181.5 693.5,181.5 693.5,181.5 694.5,181.5 694.5,181.5 695.5,181.5 695.5,181.5 696.5,181.5 696.5,181.5 697.5,181.5 697.5,181.5 698.5,181.5 698.5,181.5 699.5,181.5 699.5,181.5 700.5,181.5 700.5,181.5 701.5,181.5 701.5,181.5 702.5,181.5 702.5,181.5 703.5,181.5 703.5,181.5 704.5,181.5 704.5,181.5 705.5,181.5 705.5,181.5 706.5,181.5 706.5,180.5 707.5,181.5 707.5,183.5 708.5,181.5 708.5,181.5 709.5,181.5 709.5,181.5 710.5,181.5 710.5,181.5 711.5,181.5 711.5,181.5 712.5,181.5 712.5,181.5 713.5,181.5 713.5,181.5 714.5,181.5 714.5,182.5 715.5,181.5 715.5,181.5 716.5,181.5 716.5,181.5 717.5,181.5 717.5,181.5 718.5,181.5 718.5,181.5 719.5,181.5 719.5,181.5 720.5,181.5 720.5,182.5 721.5,182.5 721.5,181.5 722.5,181.5 722.5,181.5 723.5,181.5 723.5,181.5 724.5,181.5 724.5,182.5 725.5,182.5 725.5,181.5 726.5,181.5 726.5,181.5 727.5,181.5 727.5,181.5 728.5,182.5 728.5,181.5 729.5,182.5 729.5,181.5 730.5,181.5 730.5,181.5 731.5,181.5 731.5,182.5 732.5,182.5 732.5,182.5 733.5,181.5 733.5,181.5 734.5,182.5 734.5,181.5 735.5,181.5 735.5,181.5 736.5,182.5 736.5,181.5 737.5,181.5 737.5,181.5 738.5,181.5 738.5,181.5 739.5,182.5 739.5,181.5 740.5,182.5 740.5,181.5 741.5,181.5 741.5,181.5 742.5,181.5 742.5,182.5 743.5,182.5 743.5,181.5 744.5,181.5 744.5,181.5 745.5,181.5 745.5,181.5 746.5,181.5 746.5,181.5 747.5,181.5 747.5,181.5 748.5,181.5 748.5,181.5 749.5,181.5 749.5,181.5 750.5,181.5 750.5,181.5 751.5,181.5 751.5,180.5 752.5,180.5 752.5,180.5 753.5,180.5 753.5,180.5 754.5,180.5 754.5,180.5 755.5,180.5 755.5,180.5 756.5,180.5 756.5,180.5 757.5,180.5 757.5,181.5 758.5,181.5 758.5,181.5 759.5,181.5 759.5,181.5 760.5,181.5 760.5,181.5 761.5,181.5 761.5,181.5 762.5,181.5 762.5,182.5 763.5,181.5 763.5,182.5 764.5,181.5 764.5,182.5 765.5,181.5 765.5,183.5 766.5,181.5 766.5,181.5 767.5,182.5 767.5,182.5 768.5,182.5 768.5,181.5 769.5,182.5 769.5,181.5 770.5,181.5 770.5,181.5 771.5,181.5 771.5,182.5 772.5,182.5 772.5,181.5 773.5,182.5 773.5,182.5 774.5,182.5 774.5,182.5 775.5,182.5 775.5,182.5 776.5,182.5 776.5,182.5 777.5,182.5 777.5,182.5 778.5,182.5 778.5,182.5 779.5,182.5 779.5,182.5 780.5,182.5 780.5,182.5 781.5,182.5 781.5,181.5 782.5,182.5 782.5,182.5 783.5,182.5 783.5,182.5 784.5,182.5 784.5,183.5 785.5,182.5 785.5,182.5 786.5,182.5 786.5,182.5 787.5,182.5 787.5,181.5 788.5,182.5 788.5,182.5 789.5,181.5 789.5,182.5 790.5,182.5 790.5,182.5 791.5,182.5 791.5,182.5 792.5,181.5 792.5,182.5 793.5,182.5 793.5,182.5 794.5,182.5 794.5,182.5 795.5,182.5 795.5,182.5 796.5,182.5 796.5,182.5 797.5,181.5 797.5,182.5 798.5,182.5 798.5,182.5 799.5,182.5 799.5,182.5 800.5,182.5 800.5,182.5 801.5,182.5 801.5,182.5 802.5,182.5 802.5,182.5 803.5,182.5 803.5,182.5 804.5,182.5 804.5,182.5 805.5,182.5 805.5,182.5 806.5,182.5 806.5,182.5 807.5,182.5 807.5,182.5 808.5,182.5 808.5,182.5 809.5,182.5 809.5,182.5 810.5,182.5 810.5,181.5 811.5,182.5 811.5,181.5 812.5,182.5 812.5,182.5 813.5,182.5 813.5,182.5 814.5,182.5 814.5,182.5 815.5,183.5 815.5,182.5 816.5,182.5 816.5,182.5 817.5,182.5 817.5,182.5 818.5,181.5 818.5,182.5 819.5,182.5 819.5,182.5 820.5,182.5 820.5,181.5 821.5,181.5 821.5,181.5 822.5,182.5 822.5,182.5 823.5,183.5 823.5,182.5 824.5,181.5 824.5,182.5 825.5,181.5 825.5,182.5 826.5,182.5 826.5,182.5 827.5,182.5 827.5,181.5 828.5,182.5 828.5,181.5 829.5,181.5 829.5,182.5 830.5,182.5 830.5,182.5 831.5,182.5 831.5,182.5 832.5,182.5 832.5,182.5 833.5,182.5 833.5,182.5 834.5,182.5 834.5,182.5 835.5,181.5 835.5,182.5 836.5,182.5 836.5,181.5 836.5,169.5 836.5,181.5 837.5,181.5 837.5,176.5 837.5,181.5 837.5,181.5 837.5,181.5 838.5,181.5 838.5,181.5 839.5,181.5 839.5,180.5 840.5,180.5 840.5,180.5 841.5,180.5 841.5,179.5 842.5,179.5 842.5,179.5 843.5,179.5 843.5,179.5 844.5,179.5 844.5,180.5 845.5,179.5 845.5,179.5 846.5,180.5 846.5,180.5 847.5,180.5 847.5,181.5 848.5,181.5 848.5,180.5 849.5,181.5 849.5,181.5 850.5,181.5 850.5,181.5 851.5,181.5 851.5,181.5 852.5,181.5 852.5,182.5 853.5,181.5 853.5,182.5 854.5,182.5 854.5,181.5 855.5,181.5 855.5,182.5 856.5,182.5 856.5,181.5 857.5,182.5 857.5,182.5 858.5,181.5 858.5,182.5 859.5,183.5 859.5,182.5 860.5,182.5 860.5,181.5 861.5,182.5 861.5,181.5 862.5,182.5 862.5,183.5 863.5,182.5 863.5,182.5 864.5,182.5 864.5,182.5 865.5,182.5 865.5,182.5 866.5,182.5 866.5,182.5 867.5,182.5 867.5,182.5 868.5,182.5 868.5,182.5 869.5,182.5 869.5,182.5 870.5,182.5 870.5,182.5 871.5,182.5 871.5,183.5 872.5,182.5 872.5,182.5 873.5,182.5 873.5,182.5 874.5,182.5 874.5,182.5 875.5,182.5 875.5,182.5 876.5,182.5 876.5,182.5 877.5,182.5 877.5,182.5 878.5,181.5 878.5,182.5 879.5,182.5 879.5,183.5 880.5,182.5 880.5,182.5 881.5,181.5 881.5,182.5 882.5,181.5 882.5,183.5 883.5,182.5 883.5,182.5 884.5,182.5 884.5,182.5 885.5,182.5 885.5,182.5 886.5,182.5 886.5,182.5 887.5,182.5 887.5,182.5 888.5,182.5 888.5,183.5 889.5,182.5 889.5,182.5 890.5,182.5 890.5,183.5 891.5,182.5 891.5,182.5 892.5,182.5 892.5,182.5 893.5,182.5 893.5,182.5 894.5,182.5 894.5,182.5 895.5,182.5 895.5,182.5 896.5,182.5 896.5,182.5 897.5,182.5 897.5,182.5 898.5,183.5 898.5,182.5 899.5,181.5 899.5,182.5 900.5,182.5 900.5,182.5 901.5,182.5 901.5,183.5 902.5,182.5 902.5,182.5 903.5,182.5 903.5,182.5 904.5,182.5 904.5,182.5 905.5,182.5 905.5,183.5 906.5,182.5 906.5,182.5 907.5,182.5 907.5,182.5 908.5,182.5 908.5,182.5 909.5,182.5 909.5,182.5 910.5,182.5 910.5,182.5 911.5,182.5 911.5,182.5 912.5,182.5 912.5,182.5 913.5,182.5 913.5,182.5 914.5,182.5 914.5,182.5 915.5,182.5 915.5,182.5 916.5,182.5 916.5,182.5 917.5,182.5 917.5,181.5 918.5,182.5 918.5,182.5 919.5,182.5 919.5,183.5 920.5,182.5 920.5,182.5 921.5,182.5 921.5,182.5 922.5,183.5 922.5,183.5 923.5,182.5 923.5,182.5 924.5,182.5 924.5,183.5 925.5,182.5 925.5,182.5 926.5,182.5 926.5,182.5 927.5,182.5 927.5,182.5 928.5,182.5 928.5,182.5 929.5,182.5 929.5,183.5 930.5,182.5 930.5,182.5 931.5,182.5 931.5,181.5 932.5,182.5 932.5,182.5 933.5,182.5 933.5,181.5 934.5,181.5 934.5,182.5 935.5,182.5 935.5,182.5 936.5,181.5 936.5,182.5 936.5,171.5 936.5,182.5 937.5,182.5 937.5,177.5 937.5,182.5 937.5,181.5 937.5,182.5 938.5,182.5 938.5,182.5 939.5,182.5 939.5,182.5 940.5,182.5 940.5,182.5 941.5,182.5 941.5,182.5 942.5,182.5 942.5,182.5 943.5,182.5 943.5,182.5 944.5,182.5 944.5,182.5 945.5,182.5 945.5,182.5 946.5,181.5 946.5,182.5 947.5,182.5 947.5,182.5 948.5,182.5 948.5,182.5 949.5,182.5 949.5,182.5 950.5,182.5 950.5,182.5 951.5,182.5 951.5,183.5 952.5,182.5 952.5,182.5 953.5,182.5 953.5,183.5 954.5,182.5 954.5,181.5 955.5,182.5 955.5,182.5 956.5,182.5 956.5,182.5 957.5,182.5 957.5,182.5 958.5,182.5 958.5,182.5 959.5,182.5 959.5,180.5 960.5,182.5 960.5,182.5 961.5,182.5 961.5,183.5 962.5,182.5 962.5,182.5 963.5,182.5 963.5,182.5 964.5,183.5 964.5,181.5 965.5,182.5 965.5,182.5 966.5,182.5 966.5,182.5 967.5,182.5 967.5,182.5 968.5,182.5 968.5,182.5 969.5,182.5 969.5,182.5 970.5,182.5 970.5,182.5 971.5,182.5 971.5,181.5 972.5,182.5 972.5,182.5 973.5,182.5 973.5,181.5 974.5,182.5 974.5,182.5 975.5,182.5 975.5,182.5 976.5,182.5 976.5,182.5 977.5,182.5 977.5,182.5 978.5,182.5 978.5,182.5 979.5,182.5 979.5,182.5 980.5,182.5 980.5,182.5 981.5,182.5 981.5,182.5 982.5,182.5 982.5,182.5 983.5,182.5 983.5,182.5 984.5,182.5 984.5,182.5 985.5,182.5 985.5,182.5 986.5,182.5 986.5,182.5 987.5,182.5 987.5,182.5 988.5,182.5 988.5,183.5 989.5,182.5 989.5,182.5 990.5,182.5" fill="none" stroke="#fff" stroke-width="1"/>
</svg>
<div class="a" style="left:133px;top:186px;width:859px;height:27px;background:#f0f0f0;border-top:2px solid #fff;border-bottom:2px solid #fff"></div>
<div class="a pb" style="left:134px"></div>
<div class="a pb" style="left:157px"></div>
<div class="a pb" style="left:180px"></div>
<div class="a pb" style="left:203px"></div>
<div class="a pb" style="left:226px"></div>
<div class="a pb" style="left:249px"></div>
<div class="a pb" style="left:272px"></div>
<div class="a pb" style="left:295px"></div>
<div class="a pb" style="left:318px"></div>
<div class="a pb" style="left:435px"></div>
<div class="a pb" style="left:458px"></div>
<div class="a pb" style="left:481px"></div>
<div class="a pb" style="left:504px"></div>
<div class="a pb" style="left:527px"></div>
<div class="a pb" style="left:550px"></div>
<div class="a pb" style="left:573px"></div>
<div class="a pb" style="left:596px"></div>
<div class="a pb" style="left:619px"></div>
<div class="a pb" style="left:642px"></div>
<div class="a pb" style="left:665px"></div>
<div class="a pb" style="left:688px"></div>
<div class="a pb" style="left:785px"></div>
<div class="a pb" style="left:808px"></div>
<div class="a pb" style="left:831px"></div>
<div class="a pb" style="left:854px"></div>
<div class="a pb" style="left:877px"></div>
<div class="a pb" style="left:900px"></div>
<div class="a pb" style="left:923px"></div>
<div class="a pb" style="left:946px"></div>
<div class="a pb" style="left:969px"></div>
<div class="a" style="left:412px;top:189px;width:22px;height:22px;border-top:2px solid #a0a0a0;border-left:2px solid #a0a0a0;border-right:1px solid #fff;border-bottom:1px solid #fff;background:repeating-conic-gradient(#f4f4f4 0 25%, #e4e4e4 0 50%) 0 0/2px 2px"></div>
<div class="a" style="left:138px;top:192px;width:16px;height:15px;background:#c0c0c0"></div>
<svg class="a" style="left:138px;top:192px" width="16" height="16" viewBox="0 0 16 16"><circle cx="8" cy="8" r="7.4" fill="#008000" stroke="#000" stroke-width="1.1"/><path d="M5.6 6 Q5.6 3.3 8 3.3 Q10.5 3.3 10.5 5.6 Q10.5 7.2 8.6 8.2 V9.6" stroke="#fff" stroke-width="2.1" fill="none"/><rect x="7.4" y="10.8" width="2.4" height="2.3" fill="#fff"/></svg>
<div class="a" style="left:161px;top:192px;width:16px;height:15px;background:#c0c0c0"></div>
<svg class="a" style="left:161px;top:191px" width="16" height="16" viewBox="0 0 16 16"><path d="M5 1.5H11L14.5 5V11L11 14.5H5L1.5 11V5Z" fill="#a0a0a0" stroke="#000" stroke-width="1.1"/><path d="M5 5L11 11M11 5L5 11" stroke="#d4d4d4" stroke-width="2"/></svg>
<div class="a" style="left:185px;top:193px;width:15px;height:14px;background:#c0c0c0"></div>
<svg class="a" style="left:185px;top:193px" width="15" height="14" viewBox="0 0 15 14"><rect x="1" y="5" width="12" height="3" fill="#808080"/><path d="M1 8.5H13" stroke="#fff"/></svg>
<div class="a" style="left:208px;top:193px;width:15px;height:14px;background:#c0c0c0"></div>
<svg class="a" style="left:208px;top:193px" width="15" height="14" viewBox="0 0 15 14"><rect x="1" y="5" width="12" height="3" fill="#808080"/><rect x="5.5" y="1" width="3" height="11" fill="#808080"/><path d="M1 8.5H5M9 8.5H13M5.5 12.5H8.5" stroke="#fff"/></svg>
<div class="a" style="left:231px;top:193px;width:15px;height:14px;background:#c0c0c0"></div>
<svg class="a" style="left:231px;top:193px" width="15" height="14" viewBox="0 0 15 14"><path d="M6 2V12L1 7Z M9 2V12L14 7Z" fill="#808080"/><path d="M9 12L14 7" stroke="#fff"/></svg>
<div class="a" style="left:254px;top:193px;width:15px;height:14px;background:#c0c0c0"></div>
<svg class="a" style="left:254px;top:193px" width="15" height="14" viewBox="0 0 15 14"><path d="M2 6H13L7.5 1Z M2 9H13L7.5 14Z" fill="#808080"/><path d="M2 7.5H13" stroke="#fff"/><path d="M8 13.5L13 9" stroke="#fff"/></svg>
<div class="a" style="left:277px;top:193px;width:15px;height:14px;background:#c0c0c0"></div>
<svg class="a" style="left:277px;top:193px" width="15" height="14" viewBox="0 0 15 14"><path d="M2 5H13L7.5 0.5Z M2 9H13L7.5 13.5Z" fill="#808080"/><rect x="6" y="4" width="3" height="6" fill="#808080"/><path d="M2.5 7H6M9 7H12.5" stroke="#fff" stroke-width="1.4"/><path d="M8 13L13 9" stroke="#fff"/></svg>
<div class="a" style="left:300px;top:193px;width:15px;height:14px;background:#c0c0c0"></div>
<svg class="a" style="left:300px;top:193px" width="15" height="14" viewBox="0 0 15 14"><path d="M4 6V3.5L5.5 2H9.5L11 3.5V6M4 9V11L5.5 12.5H9.5L11 11V9" stroke="#808080" stroke-width="1.3" fill="none"/><path d="M1 6H7L4 9Z M8 9H14L11 6Z" fill="#808080"/><path d="M5 12.5H10" stroke="#fff"/></svg>
<div class="a" style="left:323px;top:193px;width:15px;height:14px;background:#c0c0c0"></div>
<svg class="a" style="left:323px;top:193px" width="15" height="14" viewBox="0 0 15 14"><path d="M2 6H13L7.5 1Z M2 9H13L7.5 14Z" fill="#808080"/><path d="M2 7.5H13" stroke="#fff"/><path d="M8 13.5L13 9" stroke="#fff"/></svg>
<svg class="a" style="left:416px;top:192px" width="17" height="17" viewBox="0 0 17 17"><path d="M1.5 2.5V11.5L3.8 9.3L5.8 13.8L7.6 13L5.7 8.6H8.7Z" fill="#fff" stroke="#000" stroke-width="1" stroke-linejoin="miter"/><path d="M10.5 9.5H15L10.5 15H15.2" stroke="#000" stroke-width="1.2" fill="none"/></svg>
<svg class="a" style="left:439px;top:192px" width="16" height="16" viewBox="0 0 16 16"><circle cx="7" cy="7" r="4.8" fill="none" stroke="#000" stroke-width="1.3"/><path d="M10.5 10.5L14 14" stroke="#000" stroke-width="2"/></svg>
<svg class="a" style="left:461px;top:191px" width="16" height="16" viewBox="0 0 16 16"><path d="M1 14.5H3.5L5.5 8L7 4L8.5 8L10 5L11.5 9L13 14.5H15" stroke="#000" stroke-width="1.1" fill="none"/><path d="M0 2.5H15" stroke="#0000ff" stroke-width="1.3"/><path d="M6 0V16" stroke="#0000ff" stroke-width="1.3"/></svg>
<svg class="a" style="left:484px;top:191px" width="16" height="16" viewBox="0 0 16 16"><path d="M1 14.5L4 11L5.5 3.5L7 10L8.5 12L10 10L11 6L12.5 11L15 14.5Z" fill="#0000ff" stroke="#000" stroke-width="1"/></svg>
<svg class="a" style="left:506px;top:190px" width="18" height="18" viewBox="0 0 18 18"><text x="9" y="9" font-family="Liberation Sans" font-size="9" font-weight="bold" text-anchor="middle" fill="#000" letter-spacing="-0.5">B.E</text><path d="M2 14.5H16" stroke="#000" stroke-width="1" stroke-dasharray="2 1"/><rect x="1" y="13" width="3" height="3" fill="#0000ff"/><rect x="7.5" y="12" width="3" height="3" fill="#0000ff"/><rect x="14" y="13" width="3" height="3" fill="#0000ff"/></svg>
<svg class="a" style="left:529px;top:190px" width="18" height="18" viewBox="0 0 18 18"><text x="9" y="9" font-family="Liberation Sans" font-size="9" font-weight="bold" text-anchor="middle" fill="#000" letter-spacing="-0.5">D.E</text><path d="M2 14.5H16" stroke="#000" stroke-width="1" stroke-dasharray="2 1"/><rect x="1" y="13" width="3" height="3" fill="#0000ff"/><rect x="7.5" y="12" width="3" height="3" fill="#0000ff"/><rect x="14" y="13" width="3" height="3" fill="#0000ff"/></svg>
<svg class="a" style="left:553px;top:191px" width="16" height="16" viewBox="0 0 16 16"><path d="M1 15L3 12L5 2L7.5 13L8.5 14L10.5 6L13 13L15 15" stroke="#000" stroke-width="1.1" fill="none"/></svg>
<svg class="a" style="left:575px;top:190px" width="18" height="18" viewBox="0 0 18 18"><text x="1" y="13" font-family="Liberation Sans" font-size="11" fill="#000" letter-spacing="-1">Kα2</text></svg>
<svg class="a" style="left:598px;top:190px" width="18" height="18" viewBox="0 0 18 18"><text x="9" y="11" font-family="Liberation Sans" font-size="12" font-weight="bold" text-anchor="middle" fill="#000">C</text><path d="M2 16V14M5 16V15M8 16V15M11 16V15M14 16V14" stroke="#000" stroke-width="1.2"/></svg>
<svg class="a" style="left:621px;top:190px" width="18" height="18" viewBox="0 0 18 18"><path d="M1 16L5.5 3L10 16M3 16L7 6" stroke="#b0b0b0" stroke-width="1.1" fill="none"/><path d="M14 2V16M12 5L14 2L16 5M12 13L14 16L16 13" stroke="#a0a0a0" stroke-width="1.2" fill="none"/></svg>
<svg class="a" style="left:644px;top:190px" width="18" height="18" viewBox="0 0 18 18"><path d="M1 15.5H11M3 15.5V5M6 15.5V8M9 15.5V10" stroke="#b0b0b0" stroke-width="1.1"/><path d="M14 2V16M12 5L14 2L16 5M12 13L14 16L16 13" stroke="#a0a0a0" stroke-width="1.2" fill="none"/></svg>
<svg class="a" style="left:668px;top:191px" width="16" height="16" viewBox="0 0 16 16"><rect x="0.5" y="0.5" width="14" height="14" fill="#000" stroke="#555"/><path d="M7.5 2V14M2 7.5H14" stroke="#00ffff" stroke-width="1.2"/></svg>
<svg class="a" style="left:691px;top:190px" width="16" height="16" viewBox="0 0 16 16"><circle cx="8" cy="8" r="7.4" fill="#008000" stroke="#000" stroke-width="1.1"/><path d="M5.6 6 Q5.6 3.3 8 3.3 Q10.5 3.3 10.5 5.6 Q10.5 7.2 8.6 8.2 V9.6" stroke="#fff" stroke-width="2.1" fill="none"/><rect x="7.4" y="10.8" width="2.4" height="2.3" fill="#fff"/></svg>
<div class="a" style="left:789px;top:193px;width:15px;height:14px;background:#c0c0c0"></div>
<svg class="a" style="left:789px;top:193px" width="15" height="14" viewBox="0 0 15 14"><path d="M2 6H13L7.5 1Z M2 9H13L7.5 14Z" fill="#808080"/><path d="M2 7.5H13" stroke="#fff"/><path d="M8 13.5L13 9" stroke="#fff"/></svg>
<div class="a" style="left:812px;top:193px;width:15px;height:14px;background:#c0c0c0"></div>
<svg class="a" style="left:812px;top:193px" width="15" height="14" viewBox="0 0 15 14"><path d="M2 5H13L7.5 0.5Z M2 9H13L7.5 13.5Z" fill="#808080"/><rect x="6" y="4" width="3" height="6" fill="#808080"/><path d="M2.5 7H6M9 7H12.5" stroke="#fff" stroke-width="1.4"/><path d="M8 13L13 9" stroke="#fff"/></svg>
<div class="a" style="left:835px;top:193px;width:15px;height:14px;background:#c0c0c0"></div>
<svg class="a" style="left:835px;top:193px" width="15" height="14" viewBox="0 0 15 14"><path d="M6 2V12L1 7Z M9 2V12L14 7Z" fill="#808080"/><path d="M9 12L14 7" stroke="#fff"/></svg>
<div class="a" style="left:858px;top:193px;width:15px;height:14px;background:#c0c0c0"></div>
<svg class="a" style="left:858px;top:193px" width="15" height="14" viewBox="0 0 15 14"><path d="M1 7L6 2V12Z M14 7L9 2V12Z" fill="#808080"/><rect x="5" y="5.5" width="5" height="3" fill="#808080"/><rect x="6.5" y="8.5" width="2" height="1.5" fill="#c0c0c0"/><path d="M9 12L14 7" stroke="#fff"/></svg>
<div class="a" style="left:881px;top:193px;width:15px;height:14px;background:#c0c0c0"></div>
<svg class="a" style="left:881px;top:193px" width="15" height="14" viewBox="0 0 15 14"><path d="M0 7.5H5" stroke="#808080" stroke-width="2"/><path d="M5 3H7L8 4H13V11H8L7 12H5Z" fill="#808080"/><rect x="9" y="6" width="2" height="2" fill="#c8c8c8"/><path d="M5 12.5H8L9 11.5H13" stroke="#fff" fill="none"/><path d="M0 8.5H5" stroke="#fff"/></svg>
<div class="a" style="left:904px;top:193px;width:15px;height:14px;background:#c0c0c0"></div>
<svg class="a" style="left:904px;top:193px" width="15" height="14" viewBox="0 0 15 14"><rect x="2" y="3" width="2" height="8" fill="#808080"/><rect x="6" y="1" width="2" height="10" fill="#808080"/><rect x="10" y="5" width="2" height="6" fill="#808080"/><rect x="1" y="11" width="13" height="1.5" fill="#808080"/><path d="M1 13.5H14" stroke="#fff"/></svg>
<div class="a" style="left:926px;top:192px;width:16px;height:15px;background:#c0c0c0"></div>
<svg class="a" style="left:926px;top:191px" width="16" height="16" viewBox="0 0 16 16"><circle cx="8" cy="8" r="6.8" fill="#a8a8a8" stroke="#000" stroke-width="1.3"/><path d="M8 2V5M8 11V14M2 8H5M11 8H14M3.8 3.8L5.9 5.9M10.1 10.1L12.2 12.2M12.2 3.8L10.1 5.9M5.9 10.1L3.8 12.2" stroke="#d8d8d8" stroke-width="1"/><circle cx="8" cy="8" r="1.8" fill="#fff" stroke="#000" stroke-width="1"/></svg>
<div class="a" style="left:949px;top:192px;width:16px;height:15px;background:#c0c0c0"></div>
<svg class="a" style="left:949px;top:191px" width="16" height="16" viewBox="0 0 16 16"><path d="M5 1.5H11L14.5 5V11L11 14.5H5L1.5 11V5Z" fill="#a0a0a0" stroke="#000" stroke-width="1.1"/><path d="M5 5L11 11M11 5L5 11" stroke="#d4d4d4" stroke-width="2"/></svg>
<div class="a" style="left:972px;top:192px;width:16px;height:15px;background:#c0c0c0"></div>
<svg class="a" style="left:972px;top:191px" width="16" height="16" viewBox="0 0 16 16"><circle cx="8" cy="8" r="7.4" fill="#008000" stroke="#000" stroke-width="1.1"/><path d="M5.6 6 Q5.6 3.3 8 3.3 Q10.5 3.3 10.5 5.6 Q10.5 7.2 8.6 8.2 V9.6" stroke="#fff" stroke-width="2.1" fill="none"/><rect x="7.4" y="10.8" width="2.4" height="2.3" fill="#fff"/></svg>
<div class="a raise" style="left:342px;top:189px;width:29px;height:23px"></div><div class="a t11" style="left:352px;top:194px;font-size:12px;color:#909090">0</div>
<div class="a sunk2" style="left:375px;top:189px;width:36px;height:22px;background:#fff"></div>
<div class="a sunk2" style="left:714px;top:189px;width:37px;height:22px;background:#fff"></div><div class="a raise" style="left:733px;top:191px;width:17px;height:19px"></div><svg class="a" style="left:737px;top:198px" width="9" height="5"><path d="M0 0H9L4.5 5Z" fill="#a0a0a0"/></svg>
<div class="a raise" style="left:754px;top:189px;width:29px;height:23px"></div><div class="a t11" style="left:764px;top:194px;font-size:12px;color:#909090">0</div>
<div class="a" style="left:133px;top:213px;width:859px;height:515px;background:#000;border-left:1px solid #808080;border-bottom:1px solid #808080;border-right:1px solid #808080"></div>
<svg class="a" style="left:0;top:0" width="1018" height="768" shape-rendering="crispEdges">
<polyline points="134.5,526.5 134.5,525.5 135.5,531.5 135.5,528.5 136.5,527.5 136.5,527.5 137.5,528.5 137.5,526.5 138.5,527.5 138.5,528.5 139.5,527.5 139.5,525.5 140.5,525.5 140.5,529.5 141.5,529.5 141.5,528.5 142.5,530.5 142.5,534.5 143.5,532.5 143.5,528.5 144.5,531.5 144.5,531.5 145.5,530.5 145.5,530.5 146.5,527.5 146.5,529.5 147.5,529.5 147.5,529.5 148.5,532.5 148.5,533.5 149.5,533.5 149.5,530.5 150.5,530.5 150.5,530.5 151.5,531.5 151.5,531.5 152.5,531.5 152.5,535.5 153.5,531.5 153.5,532.5 154.5,530.5 154.5,527.5 155.5,531.5 155.5,531.5 156.5,533.5 156.5,531.5 157.5,531.5 157.5,532.5 158.5,532.5 158.5,532.5 159.5,530.5 159.5,528.5 160.5,528.5 160.5,527.5 161.5,527.5 161.5,529.5 162.5,528.5 162.5,526.5 163.5,527.5 163.5,527.5 164.5,528.5 164.5,529.5 165.5,530.5 165.5,524.5 166.5,528.5 166.5,528.5 167.5,530.5 167.5,526.5 168.5,528.5 168.5,527.5 169.5,526.5 169.5,525.5 170.5,526.5 170.5,524.5 171.5,527.5 171.5,529.5 172.5,528.5 172.5,524.5 173.5,523.5 173.5,527.5 174.5,528.5 174.5,530.5 175.5,528.5 175.5,525.5 176.5,529.5 176.5,530.5 177.5,530.5 177.5,527.5 178.5,531.5 178.5,530.5 179.5,528.5 179.5,526.5 180.5,527.5 180.5,530.5 181.5,525.5 181.5,530.5 182.5,528.5 182.5,528.5 183.5,529.5 183.5,529.5 184.5,526.5 184.5,525.5 185.5,528.5 185.5,525.5 186.5,526.5 186.5,527.5 187.5,525.5 187.5,525.5 188.5,526.5 188.5,524.5 189.5,526.5 189.5,524.5 190.5,526.5 190.5,525.5 191.5,525.5 191.5,524.5 192.5,526.5 192.5,526.5 193.5,523.5 193.5,523.5 194.5,526.5 194.5,524.5 195.5,527.5 195.5,525.5 196.5,523.5 196.5,525.5 197.5,522.5 197.5,526.5 198.5,527.5 198.5,525.5 199.5,526.5 199.5,525.5 200.5,530.5 200.5,526.5 201.5,527.5 201.5,528.5 201.5,395.5 201.5,528.5 202.5,528.5 202.5,467.5 202.5,528.5 202.5,529.5 202.5,523.5 203.5,524.5 203.5,526.5 204.5,526.5 204.5,527.5 205.5,526.5 205.5,529.5 206.5,526.5 206.5,525.5 207.5,529.5 207.5,526.5 208.5,523.5 208.5,525.5 209.5,521.5 209.5,526.5 210.5,526.5 210.5,526.5 211.5,523.5 211.5,523.5 212.5,525.5 212.5,523.5 213.5,521.5 213.5,522.5 214.5,517.5 214.5,518.5 215.5,515.5 215.5,518.5 216.5,520.5 216.5,517.5 217.5,515.5 217.5,518.5 218.5,515.5 218.5,518.5 219.5,516.5 219.5,519.5 220.5,516.5 220.5,518.5 221.5,520.5 221.5,521.5 222.5,520.5 222.5,520.5 223.5,521.5 223.5,520.5 224.5,520.5 224.5,520.5 225.5,516.5 225.5,519.5 226.5,520.5 226.5,523.5 227.5,521.5 227.5,518.5 228.5,520.5 228.5,519.5 229.5,517.5 229.5,514.5 230.5,516.5 230.5,516.5 231.5,520.5 231.5,518.5 232.5,518.5 232.5,514.5 233.5,515.5 233.5,514.5 234.5,517.5 234.5,517.5 235.5,512.5 235.5,515.5 236.5,514.5 236.5,510.5 237.5,517.5 237.5,516.5 238.5,512.5 238.5,513.5 239.5,514.5 239.5,519.5 240.5,518.5 240.5,518.5 241.5,518.5 241.5,514.5 242.5,516.5 242.5,519.5 243.5,519.5 243.5,519.5 244.5,520.5 244.5,516.5 245.5,522.5 245.5,521.5 246.5,520.5 246.5,519.5 247.5,522.5 247.5,522.5 248.5,517.5 248.5,520.5 249.5,519.5 249.5,520.5 250.5,518.5 250.5,518.5 251.5,520.5 251.5,520.5 252.5,517.5 252.5,516.5 253.5,517.5 253.5,517.5 254.5,516.5 254.5,517.5 255.5,516.5 255.5,516.5 256.5,518.5 256.5,518.5 257.5,515.5 257.5,517.5 258.5,514.5 258.5,514.5 259.5,516.5 259.5,516.5 260.5,517.5 260.5,515.5 261.5,517.5 261.5,518.5 262.5,517.5 262.5,515.5 263.5,517.5 263.5,516.5 264.5,514.5 264.5,517.5 265.5,518.5 265.5,519.5 266.5,517.5 266.5,519.5 267.5,523.5 267.5,520.5 268.5,518.5 268.5,521.5 269.5,519.5 269.5,521.5 270.5,518.5 270.5,524.5 271.5,519.5 271.5,518.5 272.5,517.5 272.5,519.5 273.5,516.5 273.5,515.5 274.5,517.5 274.5,516.5 275.5,518.5 275.5,517.5 276.5,518.5 276.5,516.5 277.5,516.5 277.5,517.5 278.5,514.5 278.5,512.5 279.5,515.5 279.5,511.5 280.5,517.5 280.5,513.5 281.5,514.5 281.5,514.5 282.5,515.5 282.5,513.5 283.5,515.5 283.5,513.5 284.5,511.5 284.5,515.5 285.5,511.5 285.5,512.5 286.5,514.5 286.5,514.5 287.5,515.5 287.5,515.5 288.5,512.5 288.5,515.5 289.5,516.5 289.5,516.5 290.5,518.5 290.5,517.5 291.5,517.5 291.5,518.5 292.5,518.5 292.5,517.5 293.5,509.5 293.5,512.5 294.5,518.5 294.5,516.5 295.5,512.5 295.5,515.5 296.5,520.5 296.5,513.5 297.5,511.5 297.5,514.5 298.5,517.5 298.5,516.5 299.5,515.5 299.5,513.5 300.5,511.5 300.5,512.5 301.5,511.5 301.5,513.5 302.5,511.5 302.5,513.5 303.5,515.5 303.5,512.5 304.5,511.5 304.5,510.5 305.5,511.5 305.5,509.5 305.5,334.5 305.5,509.5 306.5,509.5 306.5,432.5 306.5,509.5 306.5,508.5 306.5,505.5 307.5,505.5 307.5,507.5 308.5,506.5 308.5,508.5 309.5,505.5 309.5,501.5 310.5,497.5 310.5,502.5 311.5,495.5 311.5,493.5 312.5,483.5 312.5,474.5 313.5,469.5 313.5,456.5 314.5,455.5 314.5,468.5 315.5,479.5 315.5,485.5 316.5,494.5 316.5,500.5 317.5,501.5 317.5,504.5 318.5,509.5 318.5,506.5 319.5,507.5 319.5,510.5 320.5,509.5 320.5,509.5 321.5,508.5 321.5,505.5 322.5,506.5 322.5,507.5 323.5,511.5 323.5,504.5 324.5,509.5 324.5,509.5 325.5,510.5 325.5,506.5 326.5,509.5 326.5,503.5 327.5,506.5 327.5,505.5 328.5,504.5 328.5,505.5 329.5,504.5 329.5,504.5 330.5,503.5 330.5,503.5 331.5,501.5 331.5,501.5 332.5,498.5 332.5,504.5 333.5,501.5 333.5,508.5 334.5,511.5 334.5,512.5 335.5,514.5 335.5,516.5 336.5,519.5 336.5,519.5 337.5,518.5 337.5,518.5 338.5,517.5 338.5,518.5 339.5,520.5 339.5,517.5 340.5,518.5 340.5,517.5 341.5,519.5 341.5,518.5 342.5,517.5 342.5,518.5 343.5,515.5 343.5,516.5 344.5,518.5 344.5,520.5 345.5,518.5 345.5,518.5 346.5,518.5 346.5,523.5 347.5,517.5 347.5,520.5 348.5,523.5 348.5,521.5 349.5,520.5 349.5,520.5 350.5,522.5 350.5,522.5 351.5,521.5 351.5,521.5 352.5,521.5 352.5,521.5 353.5,522.5 353.5,518.5 354.5,522.5 354.5,524.5 355.5,520.5 355.5,523.5 356.5,521.5 356.5,526.5 356.5,304.5 356.5,526.5 357.5,526.5 357.5,424.5 357.5,526.5 357.5,521.5 357.5,521.5 358.5,520.5 358.5,523.5 359.5,520.5 359.5,524.5 360.5,525.5 360.5,523.5 361.5,520.5 361.5,522.5 362.5,520.5 362.5,522.5 363.5,522.5 363.5,524.5 364.5,524.5 364.5,523.5 365.5,522.5 365.5,525.5 366.5,525.5 366.5,520.5 367.5,523.5 367.5,521.5 368.5,523.5 368.5,523.5 369.5,522.5 369.5,524.5 370.5,520.5 370.5,521.5 371.5,517.5 371.5,518.5 372.5,518.5 372.5,515.5 373.5,515.5 373.5,501.5 374.5,493.5 374.5,479.5 375.5,456.5 375.5,426.5 376.5,388.5 376.5,349.5 377.5,306.5 377.5,271.5 378.5,251.5 378.5,239.5 378.5,251.5 379.5,251.5 379.5,401.5 379.5,251.5 378.5,253.5 379.5,270.5 379.5,301.5 380.5,343.5 380.5,381.5 381.5,427.5 381.5,459.5 382.5,480.5 382.5,498.5 383.5,507.5 383.5,513.5 384.5,521.5 384.5,523.5 385.5,527.5 385.5,527.5 386.5,530.5 386.5,532.5 387.5,533.5 387.5,529.5 388.5,531.5 388.5,530.5 389.5,533.5 389.5,532.5 390.5,534.5 390.5,534.5 391.5,535.5 391.5,535.5 392.5,532.5 392.5,536.5 393.5,537.5 393.5,536.5 394.5,539.5 394.5,533.5 395.5,536.5 395.5,536.5 396.5,534.5 396.5,534.5 397.5,537.5 397.5,537.5 398.5,540.5 398.5,542.5 399.5,538.5 399.5,536.5 400.5,536.5 400.5,536.5 401.5,538.5 401.5,541.5 402.5,540.5 402.5,539.5 403.5,541.5 403.5,540.5 404.5,541.5 404.5,542.5 404.5,332.5 404.5,542.5 405.5,542.5 405.5,447.5 405.5,542.5 405.5,541.5 405.5,545.5 406.5,539.5 406.5,541.5 407.5,542.5 407.5,546.5 408.5,544.5 408.5,543.5 409.5,544.5 409.5,547.5 410.5,548.5 410.5,546.5 411.5,545.5 411.5,549.5 412.5,549.5 412.5,548.5 413.5,549.5 413.5,554.5 414.5,554.5 414.5,559.5 415.5,558.5 415.5,623.5 416.5,681.5 416.5,678.5 417.5,681.5 417.5,682.5 418.5,686.5 418.5,680.5 419.5,682.5 419.5,682.5 420.5,679.5 420.5,683.5 421.5,681.5 421.5,682.5 422.5,682.5 422.5,689.5 423.5,680.5 423.5,683.5 424.5,680.5 424.5,681.5 425.5,681.5 425.5,679.5 426.5,683.5 426.5,680.5 427.5,684.5 427.5,684.5 428.5,682.5 428.5,681.5 429.5,685.5 429.5,683.5 430.5,685.5 430.5,683.5 431.5,683.5 431.5,683.5 431.5,582.5 431.5,683.5 432.5,683.5 432.5,637.5 432.5,683.5 432.5,683.5 432.5,682.5 433.5,682.5 433.5,686.5 434.5,680.5 434.5,685.5 435.5,681.5 435.5,684.5 436.5,683.5 436.5,684.5 437.5,685.5 437.5,684.5 438.5,683.5 438.5,685.5 439.5,686.5 439.5,684.5 440.5,684.5 440.5,685.5 441.5,685.5 441.5,683.5 442.5,686.5 442.5,689.5 443.5,687.5 443.5,683.5 444.5,685.5 444.5,686.5 445.5,687.5 445.5,685.5 446.5,688.5 446.5,687.5 447.5,686.5 447.5,691.5 448.5,690.5 448.5,688.5 449.5,686.5 449.5,688.5 450.5,688.5 450.5,688.5 451.5,687.5 451.5,688.5 452.5,689.5 452.5,690.5 453.5,686.5 453.5,684.5 454.5,687.5 454.5,688.5 455.5,682.5 455.5,685.5 456.5,684.5 456.5,689.5 457.5,685.5 457.5,686.5 458.5,687.5 458.5,687.5 459.5,687.5 459.5,689.5 460.5,691.5 460.5,689.5 461.5,692.5 461.5,691.5 462.5,688.5 462.5,687.5 463.5,685.5 463.5,689.5 464.5,682.5 464.5,684.5 465.5,683.5 465.5,687.5 466.5,688.5 466.5,686.5 467.5,684.5 467.5,688.5 468.5,688.5 468.5,690.5 469.5,690.5 469.5,689.5 470.5,692.5 470.5,690.5 470.5,608.5 470.5,690.5 471.5,690.5 471.5,653.5 471.5,690.5 471.5,691.5 471.5,690.5 472.5,690.5 472.5,691.5 473.5,689.5 473.5,689.5 474.5,690.5 474.5,690.5 475.5,688.5 475.5,689.5 476.5,687.5 476.5,687.5 477.5,683.5 477.5,683.5 478.5,687.5 478.5,686.5 479.5,690.5 479.5,689.5 480.5,688.5 480.5,688.5 481.5,690.5 481.5,689.5 482.5,688.5 482.5,688.5 483.5,689.5 483.5,687.5 484.5,688.5 484.5,690.5 485.5,689.5 485.5,686.5 486.5,688.5 486.5,688.5 487.5,683.5 487.5,685.5 488.5,682.5 488.5,683.5 489.5,678.5 489.5,677.5 490.5,676.5 490.5,679.5 491.5,673.5 491.5,677.5 492.5,673.5 492.5,678.5 493.5,680.5 493.5,679.5 494.5,682.5 494.5,683.5 495.5,685.5 495.5,684.5 496.5,685.5 496.5,684.5 496.5,579.5 496.5,684.5 497.5,684.5 497.5,639.5 497.5,684.5 497.5,685.5 497.5,687.5 498.5,686.5 498.5,684.5 499.5,690.5 499.5,683.5 500.5,687.5 500.5,685.5 501.5,685.5 501.5,686.5 502.5,687.5 502.5,684.5 503.5,687.5 503.5,686.5 504.5,686.5 504.5,685.5 505.5,687.5 505.5,684.5 506.5,686.5 506.5,683.5 507.5,686.5 507.5,687.5 508.5,687.5 508.5,691.5 509.5,690.5 509.5,691.5 510.5,694.5 510.5,693.5 511.5,691.5 511.5,689.5 512.5,693.5 512.5,690.5 513.5,696.5 513.5,691.5 514.5,689.5 514.5,691.5 515.5,691.5 515.5,691.5 516.5,687.5 516.5,690.5 516.5,598.5 516.5,690.5 517.5,690.5 517.5,649.5 517.5,690.5 517.5,688.5 517.5,690.5 518.5,686.5 518.5,685.5 519.5,687.5 519.5,687.5 520.5,685.5 520.5,684.5 521.5,684.5 521.5,678.5 522.5,677.5 522.5,680.5 523.5,681.5 523.5,689.5 523.5,581.5 523.5,689.5 524.5,689.5 524.5,642.5 524.5,689.5 524.5,685.5 524.5,688.5 525.5,689.5 525.5,686.5 525.5,594.5 525.5,686.5 526.5,686.5 526.5,648.5 526.5,686.5 526.5,692.5 526.5,688.5 527.5,691.5 527.5,690.5 528.5,689.5 528.5,684.5 529.5,688.5 529.5,686.5 530.5,685.5 530.5,685.5 531.5,683.5 531.5,683.5 532.5,685.5 532.5,687.5 533.5,690.5 533.5,690.5 534.5,690.5 534.5,692.5 535.5,693.5 535.5,694.5 535.5,504.5 535.5,694.5 536.5,694.5 536.5,608.5 536.5,694.5 536.5,695.5 536.5,689.5 537.5,693.5 537.5,695.5 538.5,694.5 538.5,696.5 539.5,696.5 539.5,695.5 540.5,694.5 540.5,696.5 541.5,697.5 541.5,698.5 542.5,695.5 542.5,696.5 543.5,692.5 543.5,695.5 544.5,696.5 544.5,695.5 545.5,696.5 545.5,699.5 546.5,698.5 546.5,695.5 547.5,697.5 547.5,694.5 548.5,697.5 548.5,696.5 549.5,696.5 549.5,697.5 550.5,698.5 550.5,696.5 551.5,698.5 551.5,698.5 552.5,695.5 552.5,698.5 553.5,698.5 553.5,696.5 554.5,693.5 554.5,691.5 555.5,694.5 555.5,693.5 556.5,692.5 556.5,690.5 557.5,690.5 557.5,687.5 558.5,686.5 558.5,685.5 559.5,687.5 559.5,688.5 560.5,689.5 560.5,691.5 561.5,689.5 561.5,691.5 562.5,694.5 562.5,693.5 563.5,693.5 563.5,696.5 564.5,692.5 564.5,698.5 564.5,584.5 564.5,698.5 565.5,698.5 565.5,647.5 565.5,698.5 565.5,696.5 565.5,697.5 566.5,697.5 566.5,693.5 567.5,698.5 567.5,697.5 568.5,696.5 568.5,698.5 569.5,695.5 569.5,696.5 570.5,696.5 570.5,695.5 571.5,697.5 571.5,694.5 572.5,694.5 572.5,693.5 573.5,691.5 573.5,689.5 574.5,688.5 574.5,686.5 575.5,687.5 575.5,686.5 576.5,688.5 576.5,690.5 577.5,690.5 577.5,693.5 578.5,694.5 578.5,695.5 579.5,698.5 579.5,697.5 580.5,695.5 580.5,696.5 581.5,696.5 581.5,698.5 582.5,697.5 582.5,699.5 583.5,699.5 583.5,700.5 584.5,698.5 584.5,699.5 585.5,696.5 585.5,699.5 586.5,697.5 586.5,697.5 587.5,698.5 587.5,696.5 588.5,700.5 588.5,698.5 589.5,699.5 589.5,700.5 590.5,700.5 590.5,699.5 591.5,697.5 591.5,699.5 592.5,696.5 592.5,697.5 593.5,697.5 593.5,697.5 594.5,696.5 594.5,697.5 595.5,694.5 595.5,695.5 596.5,695.5 596.5,693.5 597.5,692.5 597.5,695.5 598.5,696.5 598.5,699.5 599.5,696.5 599.5,696.5 600.5,703.5 600.5,695.5 601.5,700.5 601.5,697.5 602.5,696.5 602.5,698.5 603.5,697.5 603.5,700.5 604.5,701.5 604.5,697.5 605.5,700.5 605.5,699.5 606.5,697.5 606.5,701.5 607.5,701.5 607.5,697.5 608.5,704.5 608.5,698.5 609.5,703.5 609.5,700.5 610.5,700.5 610.5,702.5 611.5,701.5 611.5,703.5 612.5,705.5 612.5,697.5 613.5,698.5 613.5,701.5 614.5,700.5 614.5,701.5 615.5,703.5 615.5,701.5 616.5,700.5 616.5,703.5 617.5,700.5 617.5,701.5 618.5,700.5 618.5,700.5 619.5,698.5 619.5,703.5 620.5,702.5 620.5,699.5 621.5,698.5 621.5,700.5 622.5,702.5 622.5,702.5 623.5,700.5 623.5,705.5 624.5,699.5 624.5,700.5 625.5,702.5 625.5,703.5 626.5,701.5 626.5,705.5 627.5,702.5 627.5,703.5 628.5,703.5 628.5,704.5 629.5,700.5 629.5,699.5 630.5,701.5 630.5,702.5 631.5,698.5 631.5,702.5 632.5,703.5 632.5,704.5 633.5,699.5 633.5,702.5 634.5,702.5 634.5,703.5 635.5,701.5 635.5,703.5 636.5,699.5 636.5,697.5 637.5,696.5 637.5,701.5 638.5,698.5 638.5,698.5 639.5,700.5 639.5,698.5 640.5,697.5 640.5,690.5 641.5,690.5 641.5,686.5 642.5,686.5 642.5,680.5 643.5,678.5 643.5,675.5 644.5,674.5 644.5,680.5 645.5,685.5 645.5,685.5 646.5,693.5 646.5,694.5 647.5,694.5 647.5,698.5 648.5,699.5 648.5,698.5 649.5,703.5 649.5,703.5 650.5,702.5 650.5,702.5 651.5,705.5 651.5,704.5 652.5,702.5 652.5,703.5 653.5,705.5 653.5,702.5 654.5,705.5 654.5,705.5 655.5,705.5 655.5,702.5 656.5,704.5 656.5,704.5 657.5,702.5 657.5,707.5 658.5,706.5 658.5,704.5 659.5,702.5 659.5,708.5 660.5,702.5 660.5,705.5 661.5,702.5 661.5,705.5 662.5,706.5 662.5,703.5 663.5,708.5 663.5,704.5 664.5,706.5 664.5,707.5 665.5,706.5 665.5,707.5 666.5,704.5 666.5,704.5 667.5,708.5 667.5,705.5 668.5,705.5 668.5,705.5 669.5,709.5 669.5,707.5 670.5,704.5 670.5,704.5 671.5,706.5 671.5,705.5 672.5,706.5 672.5,706.5 673.5,708.5 673.5,704.5 674.5,709.5 674.5,708.5 675.5,708.5 675.5,707.5 676.5,707.5 676.5,707.5 677.5,705.5 677.5,706.5 678.5,703.5 678.5,703.5 679.5,709.5 679.5,706.5 680.5,706.5 680.5,708.5 681.5,707.5 681.5,708.5 682.5,705.5 682.5,706.5 682.5,579.5 682.5,706.5 683.5,706.5 683.5,649.5 683.5,706.5 683.5,704.5 683.5,707.5 684.5,706.5 684.5,706.5 685.5,706.5 685.5,703.5 686.5,704.5 686.5,705.5 687.5,705.5 687.5,705.5 688.5,698.5 688.5,707.5 689.5,708.5 689.5,704.5 690.5,704.5 690.5,706.5 691.5,706.5 691.5,702.5 692.5,703.5 692.5,705.5 693.5,706.5 693.5,705.5 694.5,706.5 694.5,702.5 695.5,704.5 695.5,700.5 696.5,698.5 696.5,699.5 697.5,700.5 697.5,698.5 698.5,699.5 698.5,697.5 699.5,696.5 699.5,699.5 700.5,700.5 700.5,702.5 701.5,703.5 701.5,706.5 702.5,703.5 702.5,704.5 703.5,705.5 703.5,707.5 704.5,705.5 704.5,703.5 705.5,705.5 705.5,704.5 706.5,704.5 706.5,707.5 707.5,709.5 707.5,706.5 708.5,703.5 708.5,706.5 709.5,708.5 709.5,708.5 710.5,708.5 710.5,708.5 711.5,707.5 711.5,708.5 712.5,711.5 712.5,712.5 713.5,707.5 713.5,706.5 714.5,708.5 714.5,707.5 715.5,712.5 715.5,707.5 716.5,708.5 716.5,707.5 717.5,708.5 717.5,709.5 718.5,705.5 718.5,707.5 719.5,710.5 719.5,710.5 720.5,709.5 720.5,706.5 721.5,708.5 721.5,704.5 722.5,707.5 722.5,711.5 723.5,710.5 723.5,707.5 724.5,709.5 724.5,707.5 725.5,707.5 725.5,708.5 726.5,709.5 726.5,705.5 727.5,709.5 727.5,707.5 728.5,708.5 728.5,709.5 729.5,706.5 729.5,706.5 730.5,712.5 730.5,709.5 731.5,707.5 731.5,707.5 732.5,708.5 732.5,707.5 733.5,707.5 733.5,707.5 734.5,708.5 734.5,713.5 735.5,705.5 735.5,707.5 736.5,707.5 736.5,708.5 737.5,709.5 737.5,707.5 738.5,707.5 738.5,711.5 739.5,705.5 739.5,709.5 740.5,709.5 740.5,709.5 741.5,702.5 741.5,701.5 742.5,706.5 742.5,708.5 743.5,706.5 743.5,703.5 744.5,708.5 744.5,709.5 745.5,703.5 745.5,705.5 746.5,703.5 746.5,704.5 747.5,705.5 747.5,704.5 748.5,706.5 748.5,708.5 749.5,704.5 749.5,705.5 750.5,701.5 750.5,706.5 751.5,703.5 751.5,701.5 752.5,696.5 752.5,702.5 753.5,697.5 753.5,695.5 754.5,694.5 754.5,694.5 755.5,694.5 755.5,694.5 756.5,694.5 756.5,697.5 757.5,698.5 757.5,699.5 758.5,700.5 758.5,699.5 759.5,703.5 759.5,699.5 760.5,700.5 760.5,706.5 761.5,706.5 761.5,701.5 762.5,702.5 762.5,708.5 763.5,707.5 763.5,707.5 764.5,706.5 764.5,708.5 765.5,709.5 765.5,704.5 766.5,705.5 766.5,709.5 767.5,708.5 767.5,710.5 768.5,705.5 768.5,710.5 769.5,707.5 769.5,709.5 770.5,709.5 770.5,707.5 771.5,707.5 771.5,709.5 772.5,707.5 772.5,705.5 773.5,708.5 773.5,709.5 774.5,708.5 774.5,706.5 775.5,707.5 775.5,708.5 776.5,708.5 776.5,709.5 777.5,704.5 777.5,706.5 778.5,705.5 778.5,709.5 779.5,710.5 779.5,701.5 780.5,708.5 780.5,706.5 781.5,705.5 781.5,709.5 782.5,705.5 782.5,708.5 783.5,705.5 783.5,709.5 784.5,707.5 784.5,707.5 785.5,705.5 785.5,708.5 786.5,709.5 786.5,709.5 787.5,708.5 787.5,707.5 788.5,702.5 788.5,705.5 789.5,707.5 789.5,706.5 790.5,705.5 790.5,706.5 791.5,710.5 791.5,706.5 792.5,708.5 792.5,707.5 793.5,702.5 793.5,709.5 794.5,704.5 794.5,707.5 795.5,706.5 795.5,703.5 796.5,705.5 796.5,705.5 797.5,705.5 797.5,704.5 798.5,705.5 798.5,703.5 799.5,704.5 799.5,705.5 800.5,704.5 800.5,707.5 801.5,705.5 801.5,707.5 802.5,708.5 802.5,704.5 803.5,711.5 803.5,709.5 804.5,707.5 804.5,707.5 805.5,710.5 805.5,706.5 806.5,708.5 806.5,707.5 807.5,708.5 807.5,708.5 808.5,708.5 808.5,709.5 809.5,710.5 809.5,710.5 810.5,710.5 810.5,707.5 811.5,707.5 811.5,711.5 812.5,709.5 812.5,708.5 813.5,708.5 813.5,709.5 814.5,712.5 814.5,711.5 815.5,709.5 815.5,709.5 816.5,708.5 816.5,707.5 817.5,711.5 817.5,711.5 818.5,709.5 818.5,708.5 819.5,709.5 819.5,708.5 820.5,709.5 820.5,710.5 821.5,708.5 821.5,709.5 822.5,708.5 822.5,707.5 823.5,709.5 823.5,707.5 824.5,709.5 824.5,708.5 825.5,706.5 825.5,712.5 826.5,706.5 826.5,707.5 827.5,709.5 827.5,708.5 828.5,708.5 828.5,706.5 829.5,705.5 829.5,708.5 830.5,706.5 830.5,707.5 831.5,704.5 831.5,704.5 832.5,708.5 832.5,706.5 833.5,703.5 833.5,707.5 834.5,707.5 834.5,704.5 835.5,704.5 835.5,706.5 836.5,706.5 836.5,625.5 836.5,706.5 837.5,706.5 837.5,671.5 837.5,706.5 836.5,704.5 837.5,705.5 837.5,704.5 838.5,700.5 838.5,704.5 839.5,701.5 839.5,702.5 840.5,699.5 840.5,699.5 841.5,699.5 841.5,696.5 842.5,698.5 842.5,695.5 843.5,692.5 843.5,693.5 844.5,694.5 844.5,696.5 845.5,694.5 845.5,692.5 846.5,697.5 846.5,699.5 847.5,698.5 847.5,698.5 848.5,698.5 848.5,700.5 849.5,701.5 849.5,702.5 850.5,703.5 850.5,701.5 851.5,703.5 851.5,702.5 852.5,705.5 852.5,705.5 853.5,705.5 853.5,704.5 854.5,706.5 854.5,706.5 855.5,706.5 855.5,703.5 856.5,706.5 856.5,705.5 857.5,708.5 857.5,711.5 858.5,709.5 858.5,707.5 859.5,706.5 859.5,706.5 860.5,708.5 860.5,711.5 861.5,712.5 861.5,706.5 862.5,708.5 862.5,709.5 863.5,709.5 863.5,708.5 864.5,704.5 864.5,707.5 865.5,709.5 865.5,705.5 866.5,705.5 866.5,708.5 867.5,710.5 867.5,709.5 868.5,709.5 868.5,708.5 869.5,708.5 869.5,710.5 870.5,709.5 870.5,707.5 871.5,709.5 871.5,709.5 872.5,705.5 872.5,711.5 873.5,706.5 873.5,710.5 874.5,709.5 874.5,709.5 875.5,708.5 875.5,709.5 876.5,709.5 876.5,710.5 877.5,711.5 877.5,706.5 878.5,710.5 878.5,708.5 879.5,710.5 879.5,712.5 880.5,711.5 880.5,711.5 881.5,710.5 881.5,711.5 882.5,715.5 882.5,704.5 883.5,709.5 883.5,713.5 884.5,714.5 884.5,711.5 885.5,711.5 885.5,711.5 886.5,711.5 886.5,712.5 887.5,711.5 887.5,712.5 888.5,711.5 888.5,709.5 889.5,713.5 889.5,709.5 890.5,709.5 890.5,712.5 891.5,711.5 891.5,709.5 892.5,711.5 892.5,716.5 893.5,711.5 893.5,708.5 894.5,711.5 894.5,707.5 895.5,709.5 895.5,709.5 896.5,709.5 896.5,711.5 897.5,706.5 897.5,710.5 898.5,707.5 898.5,705.5 899.5,710.5 899.5,709.5 900.5,705.5 900.5,709.5 901.5,710.5 901.5,706.5 902.5,707.5 902.5,711.5 903.5,708.5 903.5,706.5 904.5,705.5 904.5,707.5 905.5,705.5 905.5,705.5 906.5,706.5 906.5,707.5 907.5,708.5 907.5,704.5 908.5,705.5 908.5,709.5 909.5,709.5 909.5,701.5 910.5,707.5 910.5,709.5 911.5,705.5 911.5,703.5 912.5,707.5 912.5,707.5 913.5,706.5 913.5,709.5 914.5,707.5 914.5,709.5 915.5,713.5 915.5,707.5 916.5,711.5 916.5,711.5 917.5,708.5 917.5,705.5 918.5,710.5 918.5,709.5 919.5,709.5 919.5,708.5 920.5,710.5 920.5,709.5 921.5,709.5 921.5,712.5 922.5,706.5 922.5,711.5 923.5,709.5 923.5,708.5 924.5,709.5 924.5,709.5 925.5,711.5 925.5,708.5 926.5,707.5 926.5,710.5 927.5,714.5 927.5,711.5 928.5,708.5 928.5,712.5 929.5,708.5 929.5,710.5 930.5,709.5 930.5,709.5 931.5,709.5 931.5,710.5 932.5,708.5 932.5,710.5 933.5,711.5 933.5,710.5 934.5,713.5 934.5,709.5 935.5,709.5 935.5,710.5 936.5,710.5 936.5,639.5 936.5,710.5 937.5,710.5 937.5,678.5 937.5,710.5 936.5,710.5 937.5,708.5 937.5,713.5 938.5,712.5 938.5,711.5 939.5,710.5 939.5,711.5 940.5,712.5 940.5,708.5 941.5,710.5 941.5,709.5 942.5,709.5 942.5,711.5 943.5,708.5 943.5,710.5 944.5,710.5 944.5,711.5 945.5,711.5 945.5,708.5 946.5,709.5 946.5,710.5 947.5,711.5 947.5,709.5 948.5,707.5 948.5,710.5 949.5,711.5 949.5,708.5 950.5,710.5 950.5,708.5 951.5,712.5 951.5,711.5 952.5,708.5 952.5,711.5 953.5,713.5 953.5,709.5 954.5,706.5 954.5,710.5 955.5,712.5 955.5,711.5 956.5,710.5 956.5,714.5 957.5,711.5 957.5,712.5 958.5,713.5 958.5,710.5 959.5,712.5 959.5,713.5 960.5,709.5 960.5,710.5 961.5,710.5 961.5,710.5 962.5,712.5 962.5,707.5 963.5,712.5 963.5,712.5 964.5,710.5 964.5,709.5 965.5,711.5 965.5,712.5 966.5,711.5 966.5,709.5 967.5,711.5 967.5,710.5 968.5,709.5 968.5,707.5 969.5,712.5 969.5,706.5 970.5,711.5 970.5,708.5 971.5,708.5 971.5,709.5 972.5,709.5 972.5,710.5 973.5,708.5 973.5,709.5 974.5,707.5 974.5,711.5 975.5,707.5 975.5,708.5 976.5,711.5 976.5,705.5 977.5,707.5 977.5,709.5 978.5,708.5 978.5,707.5 979.5,704.5 979.5,707.5 980.5,708.5 980.5,708.5 981.5,706.5 981.5,704.5 982.5,710.5 982.5,706.5 983.5,705.5 983.5,705.5 984.5,707.5 984.5,708.5 985.5,708.5 985.5,709.5 986.5,704.5 986.5,706.5 987.5,706.5 987.5,705.5 988.5,705.5 988.5,711.5 989.5,709.5 989.5,708.5 990.5,706.5" fill="none" stroke="#fff" stroke-width="1"/>
</svg>
<div class="a" style="left:868px;top:215px;width:2px;height:5px;background:#ffff00"></div>
<!-- left teal column -->
<div class="a raise" style="left:114px;top:103px;width:17px;height:19px;border-right-color:#808080;border-bottom-color:#808080"></div>
<svg class="a" style="left:119px;top:106px" width="6" height="12" shape-rendering="crispEdges"><path d="M4.5 1V11M1 2.5H4.5M1 5.5H4.5M1 8.5H4.5" stroke="#000" stroke-width="1"/></svg>
<div class="a raise" style="left:114px;top:213px;width:17px;height:18px;border-right-color:#808080;border-bottom-color:#808080"></div>
<svg class="a" style="left:119px;top:216px" width="6" height="12" shape-rendering="crispEdges"><path d="M4.5 1V11M1 2.5H4.5M1 5.5H4.5M1 8.5H4.5" stroke="#000" stroke-width="1"/></svg>
<div class="a" style="left:103px;top:156px;width:40px;height:14px;transform:rotate(-90deg);font-size:13px;color:#fff;text-align:center;line-height:14px">Counts</div>
<div class="a" style="left:72px;top:463px;width:100px;height:14px;transform:rotate(-90deg);font-size:13px;color:#fff;text-align:center;line-height:14px;white-space:nowrap">Intensity(Counts)</div>
<div class="a tick" style="left:144px"></div>
<div class="a tick" style="left:167px"></div>
<div class="a tick" style="left:190px"></div>
<div class="a tick" style="left:213px"></div>
<div class="a tick" style="left:236px"></div>
<div class="a tick" style="left:259px"></div>
<div class="a tick" style="left:282px"></div>
<div class="a tick" style="left:304px"></div>
<div class="a tick" style="left:327px"></div>
<div class="a tick" style="left:350px"></div>
<div class="a tick" style="left:373px"></div>
<div class="a tick" style="left:396px"></div>
<div class="a tick" style="left:419px"></div>
<div class="a tick" style="left:442px"></div>
<div class="a tick" style="left:465px"></div>
<div class="a tick" style="left:487px"></div>
<div class="a tick" style="left:510px"></div>
<div class="a tick" style="left:533px"></div>
<div class="a tick" style="left:556px"></div>
<div class="a tick" style="left:579px"></div>
<div class="a tick" style="left:602px"></div>
<div class="a tick" style="left:625px"></div>
<div class="a tick" style="left:647px"></div>
<div class="a tick" style="left:670px"></div>
<div class="a tick" style="left:693px"></div>
<div class="a tick" style="left:716px"></div>
<div class="a tick" style="left:739px"></div>
<div class="a tick" style="left:762px"></div>
<div class="a tick" style="left:785px"></div>
<div class="a tick" style="left:808px"></div>
<div class="a tick" style="left:830px"></div>
<div class="a tick" style="left:853px"></div>
<div class="a tick" style="left:876px"></div>
<div class="a tick" style="left:899px"></div>
<div class="a tick" style="left:922px"></div>
<div class="a tick" style="left:945px"></div>
<div class="a tick" style="left:968px"></div>
<div class="a tick" style="left:990px"></div>
<div class="a xl" style="left:176px">10</div>
<div class="a xl" style="left:290px">20</div>
<div class="a xl" style="left:405px">30</div>
<div class="a xl" style="left:519px">40</div>
<div class="a xl" style="left:633px">50</div>
<div class="a xl" style="left:748px">60</div>
<div class="a xl" style="left:862px">70</div>
<div class="a xl" style="left:976px">80</div>
<!-- right teal column buttons -->
<div class="a rb" style="top:525px;height:13px"></div>
<div class="a rb" style="top:538px"><i></i></div>
<div class="a rb" style="top:559px"><i></i></div>
<div class="a rb" style="top:580px"><i></i></div>
<div class="a rb" style="top:601px"><i></i></div>
<div class="a rb" style="top:622px"><i></i></div>
<div class="a rb" style="top:643px"><i></i></div>
<div class="a rb" style="top:664px"><i></i></div>
<div class="a rb" style="top:685px"><i></i></div>
<div class="a rb" style="top:706px"><i></i></div>
<svg class="a" style="left:996px;top:527px" width="14" height="9" viewBox="0 0 14 9"><rect x="0.5" y="0.5" width="13" height="7" fill="#fff" stroke="#808080"/><path d="M5 6.5L10 1.5" stroke="#ff0000"/><path d="M2 3H3M4 2H5M8 2H9" stroke="#000"/><path d="M1 8H13" stroke="#000" stroke-width="1.3"/></svg>
<svg class="a" style="left:995px;top:541px" width="16" height="16" viewBox="0 0 16 16"><circle cx="8" cy="8" r="7.4" fill="#008000" stroke="#000" stroke-width="1.1"/><path d="M5.6 6 Q5.6 3.3 8 3.3 Q10.5 3.3 10.5 5.6 Q10.5 7.2 8.6 8.2 V9.6" stroke="#fff" stroke-width="2.1" fill="none"/><rect x="7.4" y="10.8" width="2.4" height="2.3" fill="#fff"/></svg>
<svg class="a" style="left:996px;top:563px" width="14" height="14" viewBox="0 0 14 14"><rect x="6" y="0" width="2.2" height="14" fill="#0000ff"/><path d="M0 7L4 3V11Z M14 7L10 3V11Z" fill="#000"/><rect x="3" y="6" width="8" height="2" fill="#000"/><rect x="6" y="6" width="2.2" height="2" fill="#fff"/></svg>
<svg class="a" style="left:996px;top:584px" width="14" height="14" viewBox="0 0 14 14"><path d="M1.5 4L3.5 1L5.5 4Z M8.5 4L10.5 1L12.5 4Z" fill="#0000ff"/><path d="M3.5 4V10M10.5 4V10" stroke="#e0e000" stroke-width="1.5"/><rect x="0" y="10" width="14" height="2" fill="#000"/></svg>
<svg class="a" style="left:996px;top:605px" width="14" height="14" viewBox="0 0 14 14"><path d="M2 6.5L7 1.5L12 6.5" stroke="#ff00ff" stroke-width="1.5" fill="none"/><path d="M2 11L7 6L12 11" stroke="#0000ff" stroke-width="1.5" fill="none"/></svg>
<svg class="a" style="left:996px;top:626px" width="14" height="14" viewBox="0 0 14 14"><rect x="1" y="0" width="12" height="1.5" fill="#000"/><path d="M1 8L7 2.5L13 8Z" fill="#000"/><rect x="5.5" y="7" width="3" height="6" fill="#000"/></svg>
<svg class="a" style="left:996px;top:647px" width="14" height="14" viewBox="0 0 14 14"><path d="M1 5L7 0L13 5Z M1 9L7 14L13 9Z" fill="#000"/><rect x="5.5" y="4" width="3" height="6" fill="#000"/><rect x="5.5" y="6" width="3" height="2" fill="#c0c0c0"/></svg>
<svg class="a" style="left:996px;top:668px" width="14" height="14" viewBox="0 0 14 14"><path d="M0 7L5 1V13Z M14 7L9 1V13Z" fill="#000"/><rect x="4" y="5.5" width="6" height="3" fill="#000"/><rect x="6" y="5.5" width="2" height="3" fill="#c0c0c0"/></svg>
<svg class="a" style="left:996px;top:689px" width="14" height="14" viewBox="0 0 14 14"><path d="M6 1V13L0 7Z M8 1V13L14 7Z" fill="#0000ff"/></svg>
<svg class="a" style="left:996px;top:710px" width="14" height="14" viewBox="0 0 14 14"><rect x="2" y="2" width="10" height="10" fill="#000"/></svg>
<!-- status bar -->
<div class="a st " style="left:5px;width:94px">Raw Pattern</div>
<div class="a st " style="left:101px;width:92px">0 Peaks</div>
<div class="a st " style="left:195px;width:78px">2T=69.236</div>
<div class="a st " style="left:276px;width:77px">d=1.3559</div>
<div class="a st " style="left:355px;width:77px">I=330</div>
<div class="a st " style="left:434px;width:81px">Two-Theta</div>
<div class="a st sg" style="left:518px;width:29px">SAV</div>
<div class="a st sg" style="left:549px;width:29px">PKS</div>
<div class="a st sg" style="left:580px;width:28px">DSP</div>
<div class="a st sg" style="left:611px;width:29px">PDF</div>
<div class="a st sg" style="left:642px;width:29px">PFT</div>
<div class="a st sg" style="left:673px;width:29px">RPT</div>
<div class="a st sg" style="left:704px;width:28px">PID</div>
<div class="a st sg" style="left:735px;width:29px">SZS</div>
<div class="a st sg" style="left:766px;width:29px">KSI</div>
<div class="a st sg" style="left:797px;width:29px">FIT</div>
<div class="a st sg" style="left:828px;width:28px">2TH</div>
<div class="a st sg" style="left:859px;width:28px">ABC</div>
<div class="a st sg" style="left:889px;width:32px">RRP</div>
<div class="a st " style="left:925px;width:62px">LOG=OFF</div>
<svg class="a" style="left:1000px;top:751px" width="12" height="12"><path d="M11 1L1 11M11 5L5 11M11 9L9 11" stroke="#a0a0a0" stroke-width="1.2"/></svg>
</body></html>
